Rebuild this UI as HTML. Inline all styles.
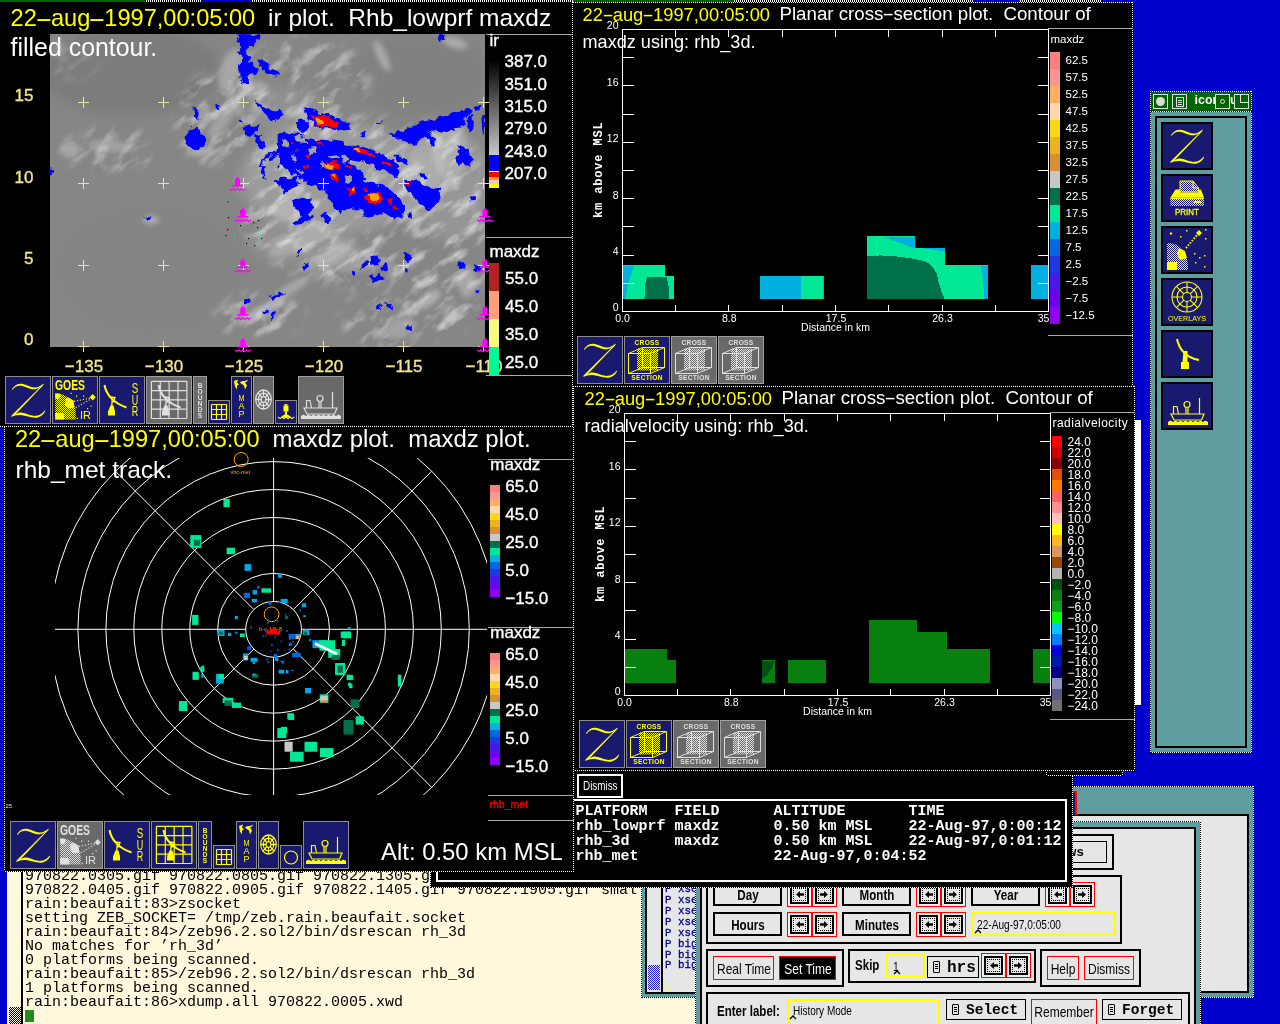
<!DOCTYPE html>
<html><head><meta charset="utf-8"><title>zeb display</title>
<style>
html,body{margin:0;padding:0;background:#0000cd;}
#scr{will-change:transform;position:relative;width:1280px;height:1024px;overflow:hidden;background:#0000cd;font-family:"Liberation Sans",sans-serif;color:#fff;}
#scr div,#scr span,#scr svg{position:absolute;box-sizing:border-box;}
.t{white-space:pre;line-height:1;}
.blk{background:#000;}
.hv{font-family:"Liberation Sans",sans-serif;}
.mono{font-family:"Liberation Mono",monospace;}
.y{color:#ffff00;}
.kh{color:#f0e68c;}
.dh{min-height:1px;background:repeating-linear-gradient(90deg,#fff 0 1px,#000 1px 2px);}
.dv{min-width:1px;background:repeating-linear-gradient(180deg,#fff 0 1px,#000 1px 2px);}
.gl{height:1px;background:#a9a9a9;}
.ico{width:46px;height:48px;border:1px solid #8c8c8c;background:#191970;}
.ico.g{background:#696969;border-color:#a0a0a0;}
.teal{background:#5f9ea0;}
.lg{background:#e6e6e6;}
.bb{border:2px solid #000;}
.rb{border:1px solid #f00;}
.nb{font-weight:bold;transform-origin:0 0;transform:scaleX(.77);color:#000;}
.nr{transform-origin:0 0;transform:scaleX(.8);color:#000;}
#scr i.hy{font-style:normal;display:inline-block;position:static;}
.b17{-webkit-text-stroke:0.35px currentColor;}

</style></head>
<body>
<div id="scr">
<div style="left:0px;top:0px;width:1280px;height:2px;background:repeating-linear-gradient(90deg,#fff 0 1px,#000 1px 2px);"></div>
<div style="left:0px;top:0px;width:145px;height:2px;background:#006400;"></div>
<div style="left:201px;top:0px;width:51px;height:2px;background:#0000cd;"></div>
<div style="left:573px;top:0px;width:160px;height:2px;background:#006400;"></div>
<div style="left:974px;top:0px;width:46px;height:2px;background:#0000cd;"></div>
<div style="left:1101px;top:0px;width:179px;height:2px;background:#0000cd;"></div>
<div class="teal" style="left:1040px;top:786px;width:214px;height:212px;"></div>
<div class="dh" style="left:1040px;top:786px;width:214px;height:0px;"></div>
<div class="dh" style="left:1040px;top:997px;width:214px;height:0px;"></div>
<div class="dv" style="left:1040px;top:786px;width:0px;height:212px;"></div>
<div class="dv" style="left:1253px;top:786px;width:0px;height:212px;"></div>
<div class="lg bb" style="left:1060px;top:814px;width:189px;height:179px;"></div>
<div style="left:1073px;top:791px;width:4px;height:24px;background:#191970;border-top:2px solid #f00;border-right:2px solid #f00;"></div>
<div style="left:0px;top:871px;width:8px;height:153px;background:#0000cd;"></div>
<div style="left:7px;top:871px;width:688px;height:153px;background:#fff8dc;"></div>
<div class="blk" style="left:21px;top:871px;width:2px;height:153px;"></div>
<div style="left:9px;top:1007px;width:12px;height:17px;background:repeating-conic-gradient(#000 0 25%,#fff8dc 0 50%) 0 0/2px 2px;"></div>
<span class="t mono" style="left:25px;top:869.2px;font-size:15px;color:#000;">970822.0305.gif 970822.0805.gif 970822.1305.gif 970822.1805.gif small</span>
<span class="t mono" style="left:25px;top:883.2px;font-size:15px;color:#000;">970822.0405.gif 970822.0905.gif 970822.1405.gif 970822.1905.gif small</span>
<span class="t mono" style="left:25px;top:897.2px;font-size:15px;color:#000;">rain:beaufait:83&gt;zsocket</span>
<span class="t mono" style="left:25px;top:911.2px;font-size:15px;color:#000;">setting ZEB_SOCKET= /tmp/zeb.rain.beaufait.socket</span>
<span class="t mono" style="left:25px;top:925.2px;font-size:15px;color:#000;">rain:beaufait:84&gt;/zeb96.2.sol2/bin/dsrescan rh_3d</span>
<span class="t mono" style="left:25px;top:939.2px;font-size:15px;color:#000;">No matches for ’rh_3d’</span>
<span class="t mono" style="left:25px;top:953.2px;font-size:15px;color:#000;">0 platforms being scanned.</span>
<span class="t mono" style="left:25px;top:967.2px;font-size:15px;color:#000;">rain:beaufait:85&gt;/zeb96.2.sol2/bin/dsrescan rhb_3d</span>
<span class="t mono" style="left:25px;top:981.2px;font-size:15px;color:#000;">1 platforms being scanned.</span>
<span class="t mono" style="left:25px;top:995.2px;font-size:15px;color:#000;">rain:beaufait:86&gt;xdump.all 970822.0005.xwd</span>
<div style="left:25px;top:1010px;width:9px;height:12px;background:#228b22;"></div>
<div class="teal" style="left:641px;top:880px;width:56px;height:118px;"></div>
<div class="dh" style="left:641px;top:997px;width:56px;height:0px;"></div>
<div class="dv" style="left:641px;top:880px;width:0px;height:118px;"></div>
<div class="lg" style="left:645px;top:880px;width:52px;height:114px;border-left:2px solid #000;border-bottom:2px solid #000;"></div>
<div class="blk" style="left:661px;top:880px;width:2px;height:112px;"></div>
<div style="left:648px;top:965px;width:12px;height:25px;background:repeating-conic-gradient(#2020c0 0 25%,#e6e6e6 0 50%) 0 0/2px 2px;"></div>
<span class="t mono" style="left:665px;top:883.82px;font-size:10.8px;color:#00008b;-webkit-text-stroke:0.3px #00008b;">P xse</span>
<span class="t mono" style="left:665px;top:894.77px;font-size:10.8px;color:#00008b;-webkit-text-stroke:0.3px #00008b;">P xse</span>
<span class="t mono" style="left:665px;top:905.72px;font-size:10.8px;color:#00008b;-webkit-text-stroke:0.3px #00008b;">P xse</span>
<span class="t mono" style="left:665px;top:916.67px;font-size:10.8px;color:#00008b;-webkit-text-stroke:0.3px #00008b;">P xse</span>
<span class="t mono" style="left:665px;top:927.62px;font-size:10.8px;color:#00008b;-webkit-text-stroke:0.3px #00008b;">P xse</span>
<span class="t mono" style="left:665px;top:938.57px;font-size:10.8px;color:#00008b;-webkit-text-stroke:0.3px #00008b;">P big</span>
<span class="t mono" style="left:665px;top:949.52px;font-size:10.8px;color:#00008b;-webkit-text-stroke:0.3px #00008b;">P big</span>
<span class="t mono" style="left:665px;top:960.47px;font-size:10.8px;color:#00008b;-webkit-text-stroke:0.3px #00008b;">P big</span>

<div class="teal" style="left:695px;top:821px;width:506px;height:203px;"></div>
<div class="dh" style="left:695px;top:821px;width:506px;height:0px;"></div>
<div class="dv" style="left:695px;top:821px;width:0px;height:204px;"></div>
<div class="dv" style="left:1200px;top:821px;width:0px;height:204px;"></div>
<div class="lg bb" style="left:700px;top:827px;width:496px;height:198px;border-bottom:none;"></div>
<div style="left:1040px;top:834px;width:74px;height:36px;border:2px solid #000;"></div>
<div style="left:1045px;top:841px;width:62px;height:22px;border:1px solid #000;"></div>
<span class="t mono" style="left:1068.5px;top:846.03px;font-size:13px;color:#000;font-weight:bold;">ws</span>
<div style="left:706px;top:875px;width:416px;height:69px;border:2px solid #000;"></div>
<div style="left:713px;top:882px;width:69px;height:24px;border:2px solid #000;"></div>
<span class="t hv" style="left:597.5px;top:887.73px;width:300px;text-align:center;font-size:14.5px;font-weight:bold;color:#000;transform:scaleX(0.8);">Day</span>
<div style="left:842px;top:882px;width:69px;height:24px;border:2px solid #000;"></div>
<span class="t hv" style="left:726.5px;top:887.73px;width:300px;text-align:center;font-size:14.5px;font-weight:bold;color:#000;transform:scaleX(0.8);">Month</span>
<div style="left:971px;top:882px;width:69px;height:24px;border:2px solid #000;"></div>
<span class="t hv" style="left:855.5px;top:887.73px;width:300px;text-align:center;font-size:14.5px;font-weight:bold;color:#000;transform:scaleX(0.8);">Year</span>
<div class="rb" style="left:787.0px;top:882px;width:25px;height:25px;background:#e8f2f2;"></div>
<div style="left:790.0px;top:885px;width:19px;height:19px;background:#000;"></div>
<div style="left:792.0px;top:887px;width:15px;height:15px;background:#e6e6e6;"></div>
<div style="left:793.0px;top:888px;width:13px;height:13px;border:1px dotted #000;"></div>
<svg style="left:795.5px;top:891px;" width="8" height="7"><polygon points="0,3.5 4.0,0 4.0,2.3 8,2.3 8,4.7 4.0,4.7 4.0,7" fill="#000"/></svg>
<div class="rb" style="left:811.5px;top:882px;width:25px;height:25px;background:#e8f2f2;"></div>
<div style="left:814.5px;top:885px;width:19px;height:19px;background:#000;"></div>
<div style="left:816.5px;top:887px;width:15px;height:15px;background:#e6e6e6;"></div>
<div style="left:817.5px;top:888px;width:13px;height:13px;border:1px dotted #000;"></div>
<svg style="left:820.0px;top:891px;" width="8" height="7"><polygon points="8,3.5 4.0,0 4.0,2.3 0,2.3 0,4.7 4.0,4.7 4.0,7" fill="#000"/></svg>
<div class="rb" style="left:916.0px;top:882px;width:25px;height:25px;background:#e8f2f2;"></div>
<div style="left:919.0px;top:885px;width:19px;height:19px;background:#000;"></div>
<div style="left:921.0px;top:887px;width:15px;height:15px;background:#e6e6e6;"></div>
<div style="left:922.0px;top:888px;width:13px;height:13px;border:1px dotted #000;"></div>
<svg style="left:924.5px;top:891px;" width="8" height="7"><polygon points="0,3.5 4.0,0 4.0,2.3 8,2.3 8,4.7 4.0,4.7 4.0,7" fill="#000"/></svg>
<div class="rb" style="left:940.5px;top:882px;width:25px;height:25px;background:#e8f2f2;"></div>
<div style="left:943.5px;top:885px;width:19px;height:19px;background:#000;"></div>
<div style="left:945.5px;top:887px;width:15px;height:15px;background:#e6e6e6;"></div>
<div style="left:946.5px;top:888px;width:13px;height:13px;border:1px dotted #000;"></div>
<svg style="left:949.0px;top:891px;" width="8" height="7"><polygon points="8,3.5 4.0,0 4.0,2.3 0,2.3 0,4.7 4.0,4.7 4.0,7" fill="#000"/></svg>
<div class="rb" style="left:1045.0px;top:882px;width:25px;height:25px;background:#e8f2f2;"></div>
<div style="left:1048.0px;top:885px;width:19px;height:19px;background:#000;"></div>
<div style="left:1050.0px;top:887px;width:15px;height:15px;background:#e6e6e6;"></div>
<div style="left:1051.0px;top:888px;width:13px;height:13px;border:1px dotted #000;"></div>
<svg style="left:1053.5px;top:891px;" width="8" height="7"><polygon points="0,3.5 4.0,0 4.0,2.3 8,2.3 8,4.7 4.0,4.7 4.0,7" fill="#000"/></svg>
<div class="rb" style="left:1069.5px;top:882px;width:25px;height:25px;background:#e8f2f2;"></div>
<div style="left:1072.5px;top:885px;width:19px;height:19px;background:#000;"></div>
<div style="left:1074.5px;top:887px;width:15px;height:15px;background:#e6e6e6;"></div>
<div style="left:1075.5px;top:888px;width:13px;height:13px;border:1px dotted #000;"></div>
<svg style="left:1078.0px;top:891px;" width="8" height="7"><polygon points="8,3.5 4.0,0 4.0,2.3 0,2.3 0,4.7 4.0,4.7 4.0,7" fill="#000"/></svg>
<div style="left:713px;top:912px;width:69px;height:24px;border:2px solid #000;"></div>
<span class="t hv" style="left:597.5px;top:917.73px;width:300px;text-align:center;font-size:14.5px;font-weight:bold;color:#000;transform:scaleX(0.8);">Hours</span>
<div style="left:842px;top:912px;width:69px;height:24px;border:2px solid #000;"></div>
<span class="t hv" style="left:726.5px;top:917.73px;width:300px;text-align:center;font-size:14.5px;font-weight:bold;color:#000;transform:scaleX(0.8);">Minutes</span>
<div class="rb" style="left:787.0px;top:912px;width:25px;height:25px;background:#e8f2f2;"></div>
<div style="left:790.0px;top:915px;width:19px;height:19px;background:#000;"></div>
<div style="left:792.0px;top:917px;width:15px;height:15px;background:#e6e6e6;"></div>
<div style="left:793.0px;top:918px;width:13px;height:13px;border:1px dotted #000;"></div>
<svg style="left:795.5px;top:921px;" width="8" height="7"><polygon points="0,3.5 4.0,0 4.0,2.3 8,2.3 8,4.7 4.0,4.7 4.0,7" fill="#000"/></svg>
<div class="rb" style="left:811.5px;top:912px;width:25px;height:25px;background:#e8f2f2;"></div>
<div style="left:814.5px;top:915px;width:19px;height:19px;background:#000;"></div>
<div style="left:816.5px;top:917px;width:15px;height:15px;background:#e6e6e6;"></div>
<div style="left:817.5px;top:918px;width:13px;height:13px;border:1px dotted #000;"></div>
<svg style="left:820.0px;top:921px;" width="8" height="7"><polygon points="8,3.5 4.0,0 4.0,2.3 0,2.3 0,4.7 4.0,4.7 4.0,7" fill="#000"/></svg>
<div class="rb" style="left:916.0px;top:912px;width:25px;height:25px;background:#e8f2f2;"></div>
<div style="left:919.0px;top:915px;width:19px;height:19px;background:#000;"></div>
<div style="left:921.0px;top:917px;width:15px;height:15px;background:#e6e6e6;"></div>
<div style="left:922.0px;top:918px;width:13px;height:13px;border:1px dotted #000;"></div>
<svg style="left:924.5px;top:921px;" width="8" height="7"><polygon points="0,3.5 4.0,0 4.0,2.3 8,2.3 8,4.7 4.0,4.7 4.0,7" fill="#000"/></svg>
<div class="rb" style="left:940.5px;top:912px;width:25px;height:25px;background:#e8f2f2;"></div>
<div style="left:943.5px;top:915px;width:19px;height:19px;background:#000;"></div>
<div style="left:945.5px;top:917px;width:15px;height:15px;background:#e6e6e6;"></div>
<div style="left:946.5px;top:918px;width:13px;height:13px;border:1px dotted #000;"></div>
<svg style="left:949.0px;top:921px;" width="8" height="7"><polygon points="8,3.5 4.0,0 4.0,2.3 0,2.3 0,4.7 4.0,4.7 4.0,7" fill="#000"/></svg>
<div style="left:971px;top:912px;width:145px;height:24px;border:2px solid #ffff00;"></div>
<span class="t hv nr" style="left:977px;top:918.842px;font-size:12px;transform:scaleX(.845);">22-Aug-97,0:05:00</span>
<svg style="left:974px;top:929px;" width="8" height="5"><path d="M1 4 L4 1 L7 4" stroke="#000" stroke-width="1.3" fill="none"/></svg>
<div style="left:706px;top:949px;width:138px;height:38px;border:2px solid #000;"></div>
<div class="rb" style="left:713px;top:956px;width:61px;height:24px;"></div>
<span class="t hv" style="left:593.5px;top:961.3px;width:300px;text-align:center;font-size:15px;font-weight:normal;color:#000;transform:scaleX(0.8);">Real Time</span>
<div class="rb" style="left:779px;top:956px;width:57px;height:24px;background:#000;"></div>
<span class="t hv" style="left:657.5px;top:961.3px;width:300px;text-align:center;font-size:15px;font-weight:normal;color:#fff;transform:scaleX(0.8);">Set Time</span>
<div style="left:848px;top:949px;width:188px;height:34px;border:2px solid #000;"></div>
<span class="t hv nb" style="left:855px;top:956.8025px;font-size:15px;">Skip</span>
<div style="left:886px;top:953px;width:39px;height:24px;border:2px solid #ffff00;"></div>
<span class="t hv nr" style="left:893px;top:959.9955px;font-size:13px;">1</span>
<svg style="left:893px;top:970px;" width="8" height="5"><path d="M1 4 L4 1 L7 4" stroke="#000" stroke-width="1.3" fill="none"/></svg>
<div style="left:927px;top:956px;width:52px;height:22px;border:1px solid #000;"></div>
<div style="left:933px;top:961px;width:7px;height:12px;border:1px solid #000;border-radius:1px;"></div>
<div class="blk" style="left:935px;top:964px;width:3px;height:1px;"></div>
<div class="blk" style="left:935px;top:966px;width:3px;height:1px;"></div>
<div class="blk" style="left:935px;top:968px;width:3px;height:1px;"></div>
<span class="t mono" style="left:947px;top:959.73px;font-size:16px;color:#000;font-weight:bold;">hrs</span>
<div class="rb" style="left:981.0px;top:953px;width:25px;height:25px;background:#e8f2f2;"></div>
<div style="left:984.0px;top:956px;width:19px;height:19px;background:#000;"></div>
<div style="left:986.0px;top:958px;width:15px;height:15px;background:#e6e6e6;"></div>
<div style="left:987.0px;top:959px;width:13px;height:13px;border:1px dotted #000;"></div>
<svg style="left:989.5px;top:962px;" width="8" height="7"><polygon points="0,3.5 4.0,0 4.0,2.3 8,2.3 8,4.7 4.0,4.7 4.0,7" fill="#000"/></svg>
<div class="rb" style="left:1005.5px;top:953px;width:25px;height:25px;background:#e8f2f2;"></div>
<div style="left:1008.5px;top:956px;width:19px;height:19px;background:#000;"></div>
<div style="left:1010.5px;top:958px;width:15px;height:15px;background:#e6e6e6;"></div>
<div style="left:1011.5px;top:959px;width:13px;height:13px;border:1px dotted #000;"></div>
<svg style="left:1014.0px;top:962px;" width="8" height="7"><polygon points="8,3.5 4.0,0 4.0,2.3 0,2.3 0,4.7 4.0,4.7 4.0,7" fill="#000"/></svg>
<div style="left:1040px;top:949px;width:101px;height:38px;border:2px solid #000;"></div>
<div class="rb" style="left:1047px;top:956px;width:32px;height:24px;"></div>
<span class="t hv" style="left:913.0px;top:961.3px;width:300px;text-align:center;font-size:15px;font-weight:normal;color:#000;transform:scaleX(0.8);">Help</span>
<div class="rb" style="left:1084px;top:956px;width:50px;height:24px;"></div>
<span class="t hv" style="left:959.0px;top:961.3px;width:300px;text-align:center;font-size:15px;font-weight:normal;color:#000;transform:scaleX(0.8);">Dismiss</span>
<div style="left:706px;top:992px;width:484px;height:40px;border:2px solid #000;"></div>
<span class="t hv nb" style="left:716.5px;top:1003.0025px;font-size:15px;">Enter label:</span>
<div style="left:787px;top:999px;width:153px;height:30px;border:2px solid #ffff00;"></div>
<span class="t hv nr" style="left:793px;top:1004.91875px;font-size:12.5px;">History Mode</span>
<svg style="left:789px;top:1015px;" width="8" height="5"><path d="M1 4 L4 1 L7 4" stroke="#000" stroke-width="1.3" fill="none"/></svg>
<div style="left:946px;top:999px;width:80px;height:21px;border:1px solid #000;"></div>
<div style="left:952px;top:1004px;width:7px;height:11px;border:1px solid #000;border-radius:1px;"></div>
<div class="blk" style="left:954px;top:1007px;width:3px;height:1px;"></div>
<div class="blk" style="left:954px;top:1009px;width:3px;height:1px;"></div>
<div class="blk" style="left:954px;top:1011px;width:3px;height:1px;"></div>
<span class="t mono" style="left:966px;top:1002.88px;font-size:14.5px;color:#000;font-weight:bold;">Select</span>
<div class="rb" style="left:1031px;top:999px;width:66px;height:30px;"></div>
<span class="t hv" style="left:914.0px;top:1004.3px;width:300px;text-align:center;font-size:15px;font-weight:normal;color:#000;transform:scaleX(0.8);">Remember</span>
<div style="left:1102px;top:999px;width:80px;height:21px;border:1px solid #000;"></div>
<div style="left:1108px;top:1004px;width:7px;height:11px;border:1px solid #000;border-radius:1px;"></div>
<div class="blk" style="left:1110px;top:1007px;width:3px;height:1px;"></div>
<div class="blk" style="left:1110px;top:1009px;width:3px;height:1px;"></div>
<div class="blk" style="left:1110px;top:1011px;width:3px;height:1px;"></div>
<span class="t mono" style="left:1122px;top:1002.88px;font-size:14.5px;color:#000;font-weight:bold;">Forget</span>

<div class="blk" style="left:430px;top:770px;width:643px;height:118px;"></div>
<div class="dh" style="left:430px;top:887px;width:643px;height:0px;"></div>
<div class="dv" style="left:430px;top:770px;width:0px;height:118px;"></div>
<div class="dv" style="left:1072px;top:770px;width:0px;height:118px;"></div>
<div style="left:436px;top:799px;width:631px;height:83px;border:2px solid #fff;"></div>
<div style="left:577px;top:774px;width:46px;height:24px;border:2px solid #fff;"></div>
<span class="t hv" style="left:583px;top:779.92px;font-size:12.5px;transform-origin:0 0;transform:scaleX(.79);">Dismiss</span>
<span class="t mono" style="left:575.5px;top:804.0px;font-size:15px;font-weight:bold;">PLATFORM   FIELD      ALTITUDE       TIME</span>
<span class="t mono" style="left:575.5px;top:819.0px;font-size:15px;font-weight:bold;">rhb_lowprf maxdz      0.50 km MSL    22-Aug-97,0:00:12</span>
<span class="t mono" style="left:575.5px;top:834.0px;font-size:15px;font-weight:bold;">rhb_3d     maxdz      0.50 km MSL    22-Aug-97,0:01:12</span>
<span class="t mono" style="left:575.5px;top:849.0px;font-size:15px;font-weight:bold;">rhb_met               22-Aug-97,0:04:52</span>
<div class="blk" style="left:1046px;top:770px;width:77px;height:6px;"></div>
<div class="dh" style="left:1046px;top:775px;width:77px;height:0px;"></div>
<div class="dv" style="left:1046px;top:770px;width:0px;height:6px;"></div>
<div class="dv" style="left:1122px;top:770px;width:0px;height:6px;"></div>

<svg width="0" height="0" style="left:0;top:0;"><defs>
<pattern id="sty" width="2" height="2" patternUnits="userSpaceOnUse"><rect width="1" height="1" fill="#ffff00"/><rect x="1" y="1" width="1" height="1" fill="#ffff00"/></pattern>
<pattern id="stg" width="2" height="2" patternUnits="userSpaceOnUse"><rect width="1" height="1" fill="#e0e0e0"/><rect x="1" y="1" width="1" height="1" fill="#e0e0e0"/></pattern>
</defs></svg>
<div class="blk" style="left:573px;top:2px;width:560px;height:384px;"></div>
<div class="dh" style="left:573px;top:2px;width:560px;height:0px;"></div>
<div class="dv" style="left:1132px;top:2px;width:0px;height:384px;"></div>
<span class="t hv y" style="left:582.5px;top:5.71px;font-size:18.3px;">22<i class="hy" style="transform:scaleX(1.9);margin:0 1.9px;">-</i>aug<i class="hy" style="transform:scaleX(1.9);margin:0 1.9px;">-</i>1997,00:05:00</span>
<span class="t hv" style="left:779.5px;top:5.37px;font-size:18.7px;">Planar cross<i class="hy" style="transform:scaleX(1.9);margin:0 1.9px;">-</i>section plot.  Contour of</span>
<span class="t hv" style="left:582.5px;top:32.88px;font-size:18.1px;">maxdz using: rhb_3d.</span>
<svg style="left:621.0px;top:28.0px;" width="430" height="286" viewBox="-1.5 -1.5 430 286">
<g shape-rendering="crispEdges"><rect x="0" y="235" width="42" height="34" fill="#00e896"/>
<rect x="42" y="246" width="9" height="23" fill="#00e896"/>
<path d="M0 236 H12 C8 244 5 255 3 269 H0 Z" fill="#00b0e0"/>
<path d="M22 269 C22 258 23 250 25 247 H44 C46 254 47 262 47 269 Z" fill="#00704a"/>
<rect x="137" y="246" width="42" height="23" fill="#00b0e0"/>
<rect x="179" y="246" width="22" height="23" fill="#00e896"/>
<rect x="200" y="246" width="1.5" height="23" fill="#00b0e0"/>
<path d="M179 247 C178 255 178 262 179 269 H182 V247 Z" fill="#00e896"/>
<rect x="244.5" y="206" width="47.5" height="63" fill="#00e896"/>
<rect x="292" y="218" width="30" height="51" fill="#00e896"/>
<rect x="322" y="235" width="43" height="34" fill="#00e896"/>
<path d="M258 207 H292 V219 C280 214 268 210 258 207 Z" fill="#00b0e0"/>
<path d="M292 218 H322 V222 C312 220 302 219 292 218 Z" fill="#00b0e0"/>
<path d="M358 236 H365 V269 H362 C361 255 360 245 358 236 Z" fill="#00b0e0"/>
<path d="M244.500 227 C262 224 285 228 300 231 C310 234 314 240 316 252 C318 260 320 265 322 269 H244.5 Z" fill="#00704a"/>
<rect x="408.5" y="235" width="17.5" height="34" fill="#00b0e0"/></g>
<g stroke="#fff" stroke-width="1" fill="none" shape-rendering="crispEdges"><path d="M0 282 L0 0 L426 0 M0 282 L426 282 M426 0 L426 282"/>
<path d="M0 28 h11 M426 28 h-11 M0 56 h11 M426 56 h-11 M0 85 h11 M426 85 h-11 M0 113 h11 M426 113 h-11 M0 141 h11 M426 141 h-11 M0 169 h11 M426 169 h-11 M0 197 h11 M426 197 h-11 M0 226 h11 M426 226 h-11 M0 254 h11 M426 254 h-11 M53 0 v7 M53 282 v-7 M106 0 v7 M106 282 v-7 M160 0 v7 M160 282 v-7 M213 0 v7 M213 282 v-7 M266 0 v7 M266 282 v-7 M320 0 v7 M320 282 v-7 M373 0 v7 M373 282 v-7"/></g>
</svg>
<span class="t hv" style="left:588.5px;width:30px;text-align:right;top:20.3px;font-size:10.5px;">20</span>
<span class="t hv" style="left:588.5px;width:30px;text-align:right;top:76.7px;font-size:10.5px;">16</span>
<span class="t hv" style="left:588.5px;width:30px;text-align:right;top:133.10000000000002px;font-size:10.5px;">12</span>
<span class="t hv" style="left:588.5px;width:30px;text-align:right;top:189.5px;font-size:10.5px;">8</span>
<span class="t hv" style="left:588.5px;width:30px;text-align:right;top:245.9px;font-size:10.5px;">4</span>
<span class="t hv" style="left:588.5px;width:30px;text-align:right;top:302.3px;font-size:10.5px;">0</span>
<span class="t hv" style="left:602.5px;width:40px;text-align:center;top:313.2px;font-size:10.5px;">0.0</span>
<span class="t hv" style="left:709.2px;width:40px;text-align:center;top:313.2px;font-size:10.5px;">8.8</span>
<span class="t hv" style="left:816.0px;width:40px;text-align:center;top:313.2px;font-size:10.5px;">17.5</span>
<span class="t hv" style="left:922.5px;width:40px;text-align:center;top:313.2px;font-size:10.5px;">26.3</span>
<span class="t hv" style="left:1023.5px;width:40px;text-align:center;top:313.2px;font-size:10.5px;">35</span>
<span class="t hv" style="left:785.5px;width:100px;text-align:center;top:322.0px;font-size:10.5px;">Distance in km</span>
<span class="t mono" style="left:593px;top:218px;font-size:12px;font-weight:bold;transform-origin:0 0;transform:rotate(-90deg);letter-spacing:0.85px;">km above MSL</span>
<span class="t hv" style="left:1050.5px;top:33.77px;font-size:11.5px;">maxdz</span>
<div style="left:1050.0px;top:52px;width:10px;height:17px;background:#fa8080;"></div>
<div style="left:1050.0px;top:69px;width:10px;height:17px;background:#ff9494;"></div>
<div style="left:1050.0px;top:86px;width:10px;height:17px;background:#ffb060;"></div>
<div style="left:1050.0px;top:103px;width:10px;height:17px;background:#ffd8b0;"></div>
<div style="left:1050.0px;top:120px;width:10px;height:17px;background:#fad818;"></div>
<div style="left:1050.0px;top:137px;width:10px;height:17px;background:#ecb420;"></div>
<div style="left:1050.0px;top:154px;width:10px;height:17px;background:#d89030;"></div>
<div style="left:1050.0px;top:171px;width:10px;height:17px;background:#c8c8c8;"></div>
<div style="left:1050.0px;top:188px;width:10px;height:17px;background:#00704a;"></div>
<div style="left:1050.0px;top:205px;width:10px;height:17px;background:#00e896;"></div>
<div style="left:1050.0px;top:222px;width:10px;height:17px;background:#00b0e0;"></div>
<div style="left:1050.0px;top:239px;width:10px;height:17px;background:#0068e0;"></div>
<div style="left:1050.0px;top:256px;width:10px;height:17px;background:#2038e0;"></div>
<div style="left:1050.0px;top:273px;width:10px;height:17px;background:#4818e8;"></div>
<div style="left:1050.0px;top:290px;width:10px;height:17px;background:#7000f0;"></div>
<div style="left:1050.0px;top:307px;width:10px;height:17px;background:#9000f8;"></div>
<span class="t hv" style="left:1065.5px;top:55.02px;font-size:11.5px;">62.5</span>
<span class="t hv" style="left:1065.5px;top:72.02px;font-size:11.5px;">57.5</span>
<span class="t hv" style="left:1065.5px;top:89.02px;font-size:11.5px;">52.5</span>
<span class="t hv" style="left:1065.5px;top:106.02px;font-size:11.5px;">47.5</span>
<span class="t hv" style="left:1065.5px;top:123.02px;font-size:11.5px;">42.5</span>
<span class="t hv" style="left:1065.5px;top:140.02px;font-size:11.5px;">37.5</span>
<span class="t hv" style="left:1065.5px;top:157.02px;font-size:11.5px;">32.5</span>
<span class="t hv" style="left:1065.5px;top:174.02px;font-size:11.5px;">27.5</span>
<span class="t hv" style="left:1065.5px;top:191.02px;font-size:11.5px;">22.5</span>
<span class="t hv" style="left:1065.5px;top:208.02px;font-size:11.5px;">17.5</span>
<span class="t hv" style="left:1065.5px;top:225.02px;font-size:11.5px;">12.5</span>
<span class="t hv" style="left:1065.5px;top:242.02px;font-size:11.5px;">7.5</span>
<span class="t hv" style="left:1065.5px;top:259.02px;font-size:11.5px;">2.5</span>
<span class="t hv" style="left:1065.5px;top:276.02px;font-size:11.5px;">−2.5</span>
<span class="t hv" style="left:1065.5px;top:293.02px;font-size:11.5px;">−7.5</span>
<span class="t hv" style="left:1065.5px;top:310.02px;font-size:11.5px;">−12.5</span>
<div class="gl" style="left:1048.0px;top:335px;width:85px;height:1px;"></div>
<div class="gl" style="left:1048.0px;top:28px;width:85px;height:1px;"></div>
<div class="ico" style="left:577px;top:336px;width:46px;height:48px;"></div><svg style="left:577px;top:336px;" width="46" height="48" viewBox="0 0 46 48"><path d="M7 13 C10 8.500 14 7 18 8 C23 9.300 27 12 31 11.500 C34 11 36 9.500 38.500 7.500 L38.500 9 L10.500 38.300 C13 36.500 16 36 19 37 C24 38.500 27 40.300 31 39.800 C35 39.300 37.500 37.300 39.500 34.500 L40 35.500 C38 39.500 34 41.800 30 41.800 C25 41.800 21 39.600 16 39.100 C12 38.700 9 39.800 6.500 41 L6.500 39.500 L35.500 10.800 C33 12.800 30 13.600 27 13.300 C23 12.800 20 10.300 16 9.800 C12.500 9.400 10 10.700 7.500 14 Z" fill="#ffff00"/></svg>
<div class="ico" style="left:624px;top:336px;width:46px;height:48px;"></div><svg style="left:624px;top:336px;" width="46" height="48" viewBox="0 0 46 48">
<text x="23" y="9" font-family="Liberation Sans,sans-serif" font-weight="bold" font-size="6.6" text-anchor="middle" fill="#ffff00" letter-spacing="0.3">CROSS</text>
<text x="23" y="43.7" font-family="Liberation Sans,sans-serif" font-weight="bold" font-size="6.6" text-anchor="middle" fill="#ffff00" letter-spacing="0.3">SECTION</text>
<g fill="none" stroke="#ffff00" stroke-width="1">
<rect x="4.5" y="17.5" width="22" height="20"/>
<path d="M4.5 17.5 L18.5 11.500 L40.5 11.5 L26.5 17.5 M40.5 11.5 L40.5 31.5 L26.5 37.5 M4.500 37.5 L18.5 31.5 L40.5 31.5 M18.5 11.5 L18.5 31.5"/>
</g>
<rect x="13" y="12.5" width="21" height="22" fill="url(#sty)"/>
</svg>
<div class="ico g" style="left:671px;top:336px;width:46px;height:48px;"></div><svg style="left:671px;top:336px;" width="46" height="48" viewBox="0 0 46 48">
<text x="23" y="9" font-family="Liberation Sans,sans-serif" font-weight="bold" font-size="6.6" text-anchor="middle" fill="#e0e0e0" letter-spacing="0.3">CROSS</text>
<text x="23" y="43.7" font-family="Liberation Sans,sans-serif" font-weight="bold" font-size="6.6" text-anchor="middle" fill="#e0e0e0" letter-spacing="0.3">SECTION</text>
<g fill="none" stroke="#e0e0e0" stroke-width="1">
<rect x="4.5" y="17.5" width="22" height="20"/>
<path d="M4.5 17.5 L18.5 11.500 L40.5 11.5 L26.5 17.5 M40.5 11.5 L40.5 31.5 L26.5 37.5 M4.500 37.5 L18.5 31.5 L40.5 31.5 M18.5 11.5 L18.5 31.5"/>
</g>
<rect x="13" y="12.5" width="21" height="22" fill="url(#stg)"/>
</svg>
<div class="ico g" style="left:718px;top:336px;width:46px;height:48px;"></div><svg style="left:718px;top:336px;" width="46" height="48" viewBox="0 0 46 48">
<text x="23" y="9" font-family="Liberation Sans,sans-serif" font-weight="bold" font-size="6.6" text-anchor="middle" fill="#e0e0e0" letter-spacing="0.3">CROSS</text>
<text x="23" y="43.7" font-family="Liberation Sans,sans-serif" font-weight="bold" font-size="6.6" text-anchor="middle" fill="#e0e0e0" letter-spacing="0.3">SECTION</text>
<g fill="none" stroke="#e0e0e0" stroke-width="1">
<rect x="4.5" y="17.5" width="22" height="20"/>
<path d="M4.5 17.5 L18.5 11.500 L40.5 11.5 L26.5 17.5 M40.5 11.5 L40.5 31.5 L26.5 37.5 M4.500 37.5 L18.5 31.5 L40.5 31.5 M18.5 11.5 L18.5 31.5"/>
</g>
<rect x="13" y="12.5" width="21" height="22" fill="url(#stg)"/>
</svg>

<div class="blk" style="left:574px;top:386px;width:561px;height:384px;"></div>
<div class="dh" style="left:575px;top:386px;width:560px;height:0px;"></div>
<div class="dv" style="left:573px;top:386px;width:0px;height:41px;"></div>
<div class="dv" style="left:1134px;top:386px;width:0px;height:384px;"></div>
<div class="dh" style="left:575px;top:770px;width:560px;height:0px;"></div>
<span class="t hv y" style="left:584.5px;top:389.71px;font-size:18.3px;">22<i class="hy" style="transform:scaleX(1.9);margin:0 1.9px;">-</i>aug<i class="hy" style="transform:scaleX(1.9);margin:0 1.9px;">-</i>1997,00:05:00</span>
<span class="t hv" style="left:781.5px;top:389.37px;font-size:18.7px;">Planar cross<i class="hy" style="transform:scaleX(1.9);margin:0 1.9px;">-</i>section plot.  Contour of</span>
<span class="t hv" style="left:584.5px;top:416.88px;font-size:18.1px;">radialvelocity using: rhb_3d.</span>
<svg style="left:623.0px;top:412.0px;" width="430" height="286" viewBox="-1.5 -1.5 430 286">
<g shape-rendering="crispEdges"><rect x="0" y="235" width="42" height="34" fill="#088010"/>
<rect x="42" y="246" width="9" height="23" fill="#088010"/>
<rect x="137" y="246" width="13" height="23" fill="#088010"/>
<path d="M137 247 H150 C148 256 143 263 137 266 Z" fill="#005014"/>
<rect x="163" y="246" width="38" height="23" fill="#088010"/>
<rect x="244.5" y="206" width="47.5" height="63" fill="#088010"/>
<rect x="292" y="218" width="30" height="51" fill="#088010"/>
<rect x="322" y="235" width="43" height="34" fill="#088010"/>
<rect x="408.5" y="235" width="17.5" height="34" fill="#088010"/></g>
<g stroke="#fff" stroke-width="1" fill="none" shape-rendering="crispEdges"><path d="M0 282 L0 0 L426 0 M0 282 L426 282 M426 0 L426 282"/>
<path d="M0 28 h11 M426 28 h-11 M0 56 h11 M426 56 h-11 M0 85 h11 M426 85 h-11 M0 113 h11 M426 113 h-11 M0 141 h11 M426 141 h-11 M0 169 h11 M426 169 h-11 M0 197 h11 M426 197 h-11 M0 226 h11 M426 226 h-11 M0 254 h11 M426 254 h-11 M53 0 v7 M53 282 v-7 M106 0 v7 M106 282 v-7 M160 0 v7 M160 282 v-7 M213 0 v7 M213 282 v-7 M266 0 v7 M266 282 v-7 M320 0 v7 M320 282 v-7 M373 0 v7 M373 282 v-7"/></g>
</svg>
<span class="t hv" style="left:590.5px;width:30px;text-align:right;top:404.3px;font-size:10.5px;">20</span>
<span class="t hv" style="left:590.5px;width:30px;text-align:right;top:460.7px;font-size:10.5px;">16</span>
<span class="t hv" style="left:590.5px;width:30px;text-align:right;top:517.0999999999999px;font-size:10.5px;">12</span>
<span class="t hv" style="left:590.5px;width:30px;text-align:right;top:573.5px;font-size:10.5px;">8</span>
<span class="t hv" style="left:590.5px;width:30px;text-align:right;top:629.9px;font-size:10.5px;">4</span>
<span class="t hv" style="left:590.5px;width:30px;text-align:right;top:686.3px;font-size:10.5px;">0</span>
<span class="t hv" style="left:604.5px;width:40px;text-align:center;top:697.2px;font-size:10.5px;">0.0</span>
<span class="t hv" style="left:711.2px;width:40px;text-align:center;top:697.2px;font-size:10.5px;">8.8</span>
<span class="t hv" style="left:818.0px;width:40px;text-align:center;top:697.2px;font-size:10.5px;">17.5</span>
<span class="t hv" style="left:924.5px;width:40px;text-align:center;top:697.2px;font-size:10.5px;">26.3</span>
<span class="t hv" style="left:1025.5px;width:40px;text-align:center;top:697.2px;font-size:10.5px;">35</span>
<span class="t hv" style="left:787.5px;width:100px;text-align:center;top:706.0px;font-size:10.5px;">Distance in km</span>
<span class="t mono" style="left:595px;top:602px;font-size:12px;font-weight:bold;transform-origin:0 0;transform:rotate(-90deg);letter-spacing:0.85px;">km above MSL</span>
<span class="t hv" style="left:1052.5px;top:417.34px;font-size:12px;letter-spacing:0.45px;">radialvelocity</span>
<div style="left:1052.0px;top:436.3px;width:10px;height:11px;background:#ff0000;"></div>
<div style="left:1052.0px;top:447.3px;width:10px;height:11px;background:#d00000;"></div>
<div style="left:1052.0px;top:458.3px;width:10px;height:11px;background:#8b0000;"></div>
<div style="left:1052.0px;top:469.3px;width:10px;height:11px;background:#e05000;"></div>
<div style="left:1052.0px;top:480.3px;width:10px;height:11px;background:#ff7800;"></div>
<div style="left:1052.0px;top:491.3px;width:10px;height:11px;background:#ff6060;"></div>
<div style="left:1052.0px;top:502.3px;width:10px;height:11px;background:#ff9090;"></div>
<div style="left:1052.0px;top:513.3px;width:10px;height:11px;background:#ffc0c0;"></div>
<div style="left:1052.0px;top:524.3px;width:10px;height:11px;background:#ffff00;"></div>
<div style="left:1052.0px;top:535.3px;width:10px;height:11px;background:#ffb820;"></div>
<div style="left:1052.0px;top:546.3px;width:10px;height:11px;background:#d89860;"></div>
<div style="left:1052.0px;top:557.3px;width:10px;height:11px;background:#a04800;"></div>
<div style="left:1052.0px;top:568.3px;width:10px;height:11px;background:#b4b4b4;"></div>
<div style="left:1052.0px;top:579.3px;width:10px;height:11px;background:#005014;"></div>
<div style="left:1052.0px;top:590.3px;width:10px;height:11px;background:#088010;"></div>
<div style="left:1052.0px;top:601.3px;width:10px;height:11px;background:#10a018;"></div>
<div style="left:1052.0px;top:612.3px;width:10px;height:11px;background:#00ff00;"></div>
<div style="left:1052.0px;top:623.3px;width:10px;height:11px;background:#00c8ff;"></div>
<div style="left:1052.0px;top:634.3px;width:10px;height:11px;background:#0080ff;"></div>
<div style="left:1052.0px;top:645.3px;width:10px;height:11px;background:#0000d8;"></div>
<div style="left:1052.0px;top:656.3px;width:10px;height:11px;background:#0018a8;"></div>
<div style="left:1052.0px;top:667.3px;width:10px;height:11px;background:#000080;"></div>
<div style="left:1052.0px;top:678.3px;width:10px;height:11px;background:#9090c0;"></div>
<div style="left:1052.0px;top:689.3px;width:10px;height:11px;background:#585880;"></div>
<div style="left:1052.0px;top:700.3px;width:10px;height:11px;background:#707070;"></div>
<span class="t hv" style="left:1067.5px;top:436.08px;font-size:12px;">24.0</span>
<span class="t hv" style="left:1067.5px;top:447.08px;font-size:12px;">22.0</span>
<span class="t hv" style="left:1067.5px;top:458.08px;font-size:12px;">20.0</span>
<span class="t hv" style="left:1067.5px;top:469.08px;font-size:12px;">18.0</span>
<span class="t hv" style="left:1067.5px;top:480.08px;font-size:12px;">16.0</span>
<span class="t hv" style="left:1067.5px;top:491.08px;font-size:12px;">14.0</span>
<span class="t hv" style="left:1067.5px;top:502.08px;font-size:12px;">12.0</span>
<span class="t hv" style="left:1067.5px;top:513.08px;font-size:12px;">10.0</span>
<span class="t hv" style="left:1067.5px;top:524.08px;font-size:12px;">8.0</span>
<span class="t hv" style="left:1067.5px;top:535.08px;font-size:12px;">6.0</span>
<span class="t hv" style="left:1067.5px;top:546.08px;font-size:12px;">4.0</span>
<span class="t hv" style="left:1067.5px;top:557.08px;font-size:12px;">2.0</span>
<span class="t hv" style="left:1067.5px;top:568.08px;font-size:12px;">0.0</span>
<span class="t hv" style="left:1067.5px;top:579.08px;font-size:12px;">−2.0</span>
<span class="t hv" style="left:1067.5px;top:590.08px;font-size:12px;">−4.0</span>
<span class="t hv" style="left:1067.5px;top:601.08px;font-size:12px;">−6.0</span>
<span class="t hv" style="left:1067.5px;top:612.08px;font-size:12px;">−8.0</span>
<span class="t hv" style="left:1067.5px;top:623.08px;font-size:12px;">−10.0</span>
<span class="t hv" style="left:1067.5px;top:634.08px;font-size:12px;">−12.0</span>
<span class="t hv" style="left:1067.5px;top:645.08px;font-size:12px;">−14.0</span>
<span class="t hv" style="left:1067.5px;top:656.08px;font-size:12px;">−16.0</span>
<span class="t hv" style="left:1067.5px;top:667.08px;font-size:12px;">−18.0</span>
<span class="t hv" style="left:1067.5px;top:678.08px;font-size:12px;">−20.0</span>
<span class="t hv" style="left:1067.5px;top:689.08px;font-size:12px;">−22.0</span>
<span class="t hv" style="left:1067.5px;top:700.08px;font-size:12px;">−24.0</span>
<div class="gl" style="left:1050.0px;top:719px;width:85px;height:1px;"></div>
<div class="gl" style="left:1050.0px;top:412px;width:85px;height:1px;"></div>
<div class="ico" style="left:579px;top:720px;width:46px;height:48px;"></div><svg style="left:579px;top:720px;" width="46" height="48" viewBox="0 0 46 48"><path d="M7 13 C10 8.500 14 7 18 8 C23 9.300 27 12 31 11.500 C34 11 36 9.500 38.500 7.500 L38.500 9 L10.500 38.300 C13 36.500 16 36 19 37 C24 38.500 27 40.300 31 39.800 C35 39.300 37.500 37.300 39.500 34.500 L40 35.500 C38 39.500 34 41.800 30 41.800 C25 41.800 21 39.600 16 39.100 C12 38.700 9 39.800 6.500 41 L6.500 39.500 L35.500 10.800 C33 12.800 30 13.600 27 13.300 C23 12.800 20 10.300 16 9.800 C12.500 9.400 10 10.700 7.500 14 Z" fill="#ffff00"/></svg>
<div class="ico" style="left:626px;top:720px;width:46px;height:48px;"></div><svg style="left:626px;top:720px;" width="46" height="48" viewBox="0 0 46 48">
<text x="23" y="9" font-family="Liberation Sans,sans-serif" font-weight="bold" font-size="6.6" text-anchor="middle" fill="#ffff00" letter-spacing="0.3">CROSS</text>
<text x="23" y="43.7" font-family="Liberation Sans,sans-serif" font-weight="bold" font-size="6.6" text-anchor="middle" fill="#ffff00" letter-spacing="0.3">SECTION</text>
<g fill="none" stroke="#ffff00" stroke-width="1">
<rect x="4.5" y="17.5" width="22" height="20"/>
<path d="M4.5 17.5 L18.5 11.500 L40.5 11.5 L26.5 17.5 M40.5 11.5 L40.5 31.5 L26.5 37.5 M4.500 37.5 L18.5 31.5 L40.5 31.5 M18.5 11.5 L18.5 31.5"/>
</g>
<rect x="13" y="12.5" width="21" height="22" fill="url(#sty)"/>
</svg>
<div class="ico g" style="left:673px;top:720px;width:46px;height:48px;"></div><svg style="left:673px;top:720px;" width="46" height="48" viewBox="0 0 46 48">
<text x="23" y="9" font-family="Liberation Sans,sans-serif" font-weight="bold" font-size="6.6" text-anchor="middle" fill="#e0e0e0" letter-spacing="0.3">CROSS</text>
<text x="23" y="43.7" font-family="Liberation Sans,sans-serif" font-weight="bold" font-size="6.6" text-anchor="middle" fill="#e0e0e0" letter-spacing="0.3">SECTION</text>
<g fill="none" stroke="#e0e0e0" stroke-width="1">
<rect x="4.5" y="17.5" width="22" height="20"/>
<path d="M4.5 17.5 L18.5 11.500 L40.5 11.5 L26.5 17.5 M40.5 11.5 L40.5 31.5 L26.5 37.5 M4.500 37.5 L18.5 31.5 L40.5 31.5 M18.5 11.5 L18.5 31.5"/>
</g>
<rect x="13" y="12.5" width="21" height="22" fill="url(#stg)"/>
</svg>
<div class="ico g" style="left:720px;top:720px;width:46px;height:48px;"></div><svg style="left:720px;top:720px;" width="46" height="48" viewBox="0 0 46 48">
<text x="23" y="9" font-family="Liberation Sans,sans-serif" font-weight="bold" font-size="6.6" text-anchor="middle" fill="#e0e0e0" letter-spacing="0.3">CROSS</text>
<text x="23" y="43.7" font-family="Liberation Sans,sans-serif" font-weight="bold" font-size="6.6" text-anchor="middle" fill="#e0e0e0" letter-spacing="0.3">SECTION</text>
<g fill="none" stroke="#e0e0e0" stroke-width="1">
<rect x="4.5" y="17.5" width="22" height="20"/>
<path d="M4.5 17.5 L18.5 11.500 L40.5 11.5 L26.5 17.5 M40.5 11.5 L40.5 31.5 L26.5 37.5 M4.500 37.5 L18.5 31.5 L40.5 31.5 M18.5 11.5 L18.5 31.5"/>
</g>
<rect x="13" y="12.5" width="21" height="22" fill="url(#stg)"/>
</svg>
<div style="left:1135px;top:420px;width:6px;height:285px;background:#fff;"></div>

<div class="blk" style="left:0px;top:2px;width:573px;height:425px;"></div>
<div class="dv" style="left:572px;top:2px;width:0px;height:425px;"></div>
<div class="dh" style="left:0px;top:426px;width:574px;height:0px;"></div>
<span class="t hv y" style="left:10.6px;top:7.02px;font-size:23.6px;">22<i class="hy" style="transform:scaleX(2.25);margin:0 3.1px;">-</i>aug<i class="hy" style="transform:scaleX(2.25);margin:0 3.1px;">-</i>1997,00:05:00</span>
<span class="t hv" style="left:268px;top:5.76px;font-size:24.5px;">ir plot.  Rhb_lowprf maxdz</span>
<svg style="left:50px;top:34px;" width="435" height="313" viewBox="50 34 435 313">
<defs>
<filter id="jag" x="-5%" y="-5%" width="110%" height="110%"><feTurbulence type="fractalNoise" baseFrequency="0.16" numOctaves="2" seed="7" result="n"/><feDisplacementMap in="SourceGraphic" in2="n" scale="7" xChannelSelector="R" yChannelSelector="G"/></filter>
<filter id="bl6"><feGaussianBlur stdDeviation="6"/></filter>
<filter id="bl3"><feGaussianBlur stdDeviation="2.5"/></filter>
<filter id="cld" x="0" y="0" width="100%" height="100%"><feTurbulence type="fractalNoise" baseFrequency="0.04 0.085" numOctaves="5" seed="11"/><feColorMatrix type="matrix" values="0 0 0 0 1  0 0 0 0 1  0 0 0 0 1  3.2 0 0 0 -1.5"/></filter>
<radialGradient id="cm1"><stop offset="0" stop-color="#fff"/><stop offset="0.7" stop-color="#fff" stop-opacity=".7"/><stop offset="1" stop-color="#fff" stop-opacity="0"/></radialGradient>
<mask id="cmask" maskUnits="userSpaceOnUse" x="50" y="34" width="435" height="313">
<rect x="50" y="34" width="435" height="313" fill="#000"/>
<g filter="url(#bl6)" fill="#fff">
<ellipse cx="350" cy="200" rx="110" ry="85"/>
<ellipse cx="440" cy="230" rx="50" ry="110"/>
<ellipse cx="300" cy="80" rx="70" ry="40" opacity=".8"/>
<ellipse cx="215" cy="120" rx="40" ry="45" opacity=".9"/>
<ellipse cx="110" cy="150" rx="50" ry="22" opacity=".7"/>
<ellipse cx="260" cy="315" rx="45" ry="22" opacity=".9"/>
<ellipse cx="390" cy="320" rx="50" ry="30" opacity=".8"/>
<ellipse cx="70" cy="60" rx="30" ry="20" opacity=".4"/>
</g></mask>
</defs>
<rect x="50" y="34" width="435" height="313" fill="#868686"/>
<g filter="url(#bl6)"><ellipse cx="130" cy="70" rx="90" ry="45" fill="#7c7c7c"/><ellipse cx="420" cy="75" rx="70" ry="40" fill="#818181"/><ellipse cx="150" cy="270" rx="90" ry="60" fill="#848484"/></g>
<g filter="url(#bl6)"><ellipse cx="335" cy="178" rx="95" ry="55" fill="#a2a2a2" opacity=".75"/><ellipse cx="450" cy="185" rx="40" ry="55" fill="#9c9c9c" opacity=".7"/><ellipse cx="300" cy="240" rx="50" ry="25" fill="#9a9a9a" opacity=".6"/><ellipse cx="285" cy="110" rx="40" ry="22" fill="#989898" opacity=".6"/></g>
<g filter="url(#bl3)" fill="#d8d8d8">
<ellipse cx="262" cy="311" rx="28" ry="5" transform="rotate(-28 262 311)" opacity="0.55"/>
<ellipse cx="290" cy="289" rx="22" ry="5" transform="rotate(-30 290 289)" opacity="0.4"/>
<ellipse cx="382" cy="56" rx="5" ry="17" transform="rotate(-25 382 56)" opacity="0.45"/>
<ellipse cx="455" cy="43" rx="13" ry="5" transform="rotate(15 455 43)" opacity="0.5"/>
<ellipse cx="203" cy="152" rx="16" ry="5" transform="rotate(0 203 152)" opacity="0.45"/>
<ellipse cx="222" cy="120" rx="7" ry="22" transform="rotate(35 222 120)" opacity="0.35"/>
<ellipse cx="235" cy="100" rx="6" ry="18" transform="rotate(-20 235 100)" opacity="0.3"/>
<ellipse cx="110" cy="146" rx="22" ry="6" transform="rotate(5 110 146)" opacity="0.35"/>
<ellipse cx="428" cy="300" rx="15" ry="6" transform="rotate(-35 428 300)" opacity="0.5"/>
<ellipse cx="467" cy="282" rx="9" ry="16" transform="rotate(0 467 282)" opacity="0.4"/>
<ellipse cx="400" cy="328" rx="16" ry="10" transform="rotate(-20 400 328)" opacity="0.35"/>
<ellipse cx="340" cy="152" rx="30" ry="5" transform="rotate(20 340 152)" opacity="0.5"/>
<ellipse cx="375" cy="195" rx="10" ry="22" transform="rotate(-40 375 195)" opacity="0.35"/>
<ellipse cx="300" cy="240" rx="35" ry="10" transform="rotate(-25 300 240)" opacity="0.35"/>
<ellipse cx="330" cy="255" rx="30" ry="8" transform="rotate(-30 330 255)" opacity="0.3"/>
<ellipse cx="425" cy="170" rx="20" ry="35" transform="rotate(10 425 170)" opacity="0.3"/>
<ellipse cx="450" cy="150" rx="18" ry="30" transform="rotate(0 450 150)" opacity="0.35"/>
<ellipse cx="230" cy="70" rx="10" ry="22" transform="rotate(20 230 70)" opacity="0.4"/>
<ellipse cx="255" cy="88" rx="14" ry="7" transform="rotate(0 255 88)" opacity="0.4"/>
<ellipse cx="151" cy="220" rx="8" ry="4.5" transform="rotate(0 151 220)" opacity="0.5"/>
<ellipse cx="310" cy="118" rx="25" ry="6" transform="rotate(15 310 118)" opacity="0.3"/>
<ellipse cx="70" cy="150" rx="10" ry="8" transform="rotate(0 70 150)" opacity="0.4"/>
<ellipse cx="410" cy="215" rx="14" ry="8" transform="rotate(30 410 215)" opacity="0.35"/>
<ellipse cx="352" cy="260" rx="25" ry="12" transform="rotate(0 352 260)" opacity="0.3"/>
<ellipse cx="290" cy="210" rx="18" ry="12" transform="rotate(0 290 210)" opacity="0.4"/>
<ellipse cx="60" cy="50" rx="6" ry="8" transform="rotate(0 60 50)" opacity="0.3"/>
</g>
<g mask="url(#cmask)"><g transform="rotate(-38 267 190)"><rect x="-40" y="-120" width="620" height="620" filter="url(#cld)" opacity=".5"/></g></g>
<g filter="url(#jag)">
<g fill="#0000ff">
<polygon points="237.3,34.3 259.7,34.3 258.8,39.5 253.7,42.9 252.8,48 247.7,48 248.5,54.1 249.4,62.7 254.5,64.4 258.8,70.4 256.3,75.5 249.4,73.8 248.5,83.3 243.4,83.3 240.8,76.4 238.2,64.4 242.5,59.2 239.1,52.3 240.8,47.2 237.3,40.3" fill="#0000ff"/>
<polygon points="257.1,58.4 263.1,59.2 268.3,67.8 278.6,73 278.6,76.1 270,73.8 263.1,70.4 258.8,63.5" fill="#0000ff"/>
<polygon points="194.4,105.6 198.2,106.5 198.7,118.5 195.2,118.5" fill="#0000ff"/>
<polygon points="216.4,105.1 219.3,104.8 219,109.9 216.7,109.4" fill="#0000ff"/>
<polygon points="253.7,100.5 258,102.2 263.1,106.5 271.7,110.8 280.3,110.8 283.8,114.2 278.6,115.9 274.3,122 269.1,120.2 266.6,114.2 261.4,109.1 258,104.8" fill="#0000ff"/>
<polygon points="242.5,127.1 249.4,123.7 253.7,128 259.7,124.5 258,129.7 253.7,133.1 249.4,136.6 245.1,133.1" fill="#0000ff"/>
<polygon points="253.7,134.8 258.8,134 264.8,145.2 264,150.3 259.7,147.7 255.4,140" fill="#0000ff"/>
<polygon points="239.4,118.5 242.2,119.4 242.5,123.7 239.4,122.8" fill="#0000ff"/>
<polygon points="303.5,108.2 309.5,109.1 319.8,112.5 333.6,116.8 349.1,122.8 351.6,129.7 342.2,130.6 331.9,128 321.6,128.8 314.7,125.4 309.5,119.4 306.1,114.2" fill="#0000ff"/>
<polygon points="298.4,119.4 306.1,120.2 309.5,126.3 306.1,131.4 300.9,133.1 297.5,128" fill="#0000ff"/>
<polygon points="277.7,134.3 287.2,133.4 295.8,131.4 304.4,137.7 319.8,139.5 330.2,140.3 342.2,142 352.5,145.5 366.3,147.2 376.6,152.3 390.3,159.2 398.1,164.4 398.1,177.3 390.3,173.8 381.7,170.4 373.1,166.1 362.8,161.8 350.8,159.2 349.1,162.7 359.4,169.5 366.3,177.3 362.8,180.7 373.1,183.3 386.9,186.7 395.5,193.6 401.5,200.5 404.9,209.1 402.3,215.9 395.5,219.4 388.6,215.1 380,214.2 373.1,216.8 366.3,217.7 362.8,210.8 355.9,208.2 347.3,209.9 338.8,211.6 330.2,202.2 327.6,195.3 321.6,190.2 313,185 307,181.6 300.9,181.6 292.3,189.3 282.9,193.6 280.3,185 272.6,180.7 280.3,179 290.6,178.1 300.1,176.4 303.5,172.1 295.8,168.7 286.3,168.7 282,159.2 276.9,150.6 277.7,140.3" fill="#0000ff"/>
<polygon points="278.6,133.1 280.3,153.8 271.7,154.6 263.1,160.6 260.6,165.8 265.7,166.6 264,176.1 267.4,181.3 263.1,177.8 261.4,167.5 258.8,165.8 262.3,158.9 270,152.9 277.7,151.2" fill="#0000ff"/>
<polygon points="270,157.2 280.3,155.5 287.2,164.1 297.5,170.9 302.7,176.1 295.8,176.1 287.2,169.2 278.6,162.3 271.7,160.6" fill="#0000ff"/>
<polygon points="270.9,155.8 276.9,153.2 280.3,160.9 276.9,167 273.4,160.9" fill="#0000ff"/>
<polygon points="404.1,179.8 419.5,180.7 429.8,188.4 440.2,188.4 439.3,198.8 435,205.6 430.7,210.8 425.6,207.3 419.5,203.9 412.7,195.3 405.8,188.4" fill="#0000ff"/>
<polygon points="392.9,155.8 400.6,155.8 407.5,160.9 406.6,165.2 398.9,161.8" fill="#0000ff"/>
<polygon points="417.8,173 424.7,173.8 426.4,179 421.3,177.3" fill="#0000ff"/>
<polygon points="408.4,212.5 411.8,212.5 411.8,219.4 409.2,218.5" fill="#0000ff"/>
<polygon points="388.6,134.8 397.2,131.4 407.5,128.8 419.5,122.8 431.6,119.4 441.9,116.8 455.6,112.5 469.4,108.2 471.1,112.5 464.2,117.7 465.9,123.7 459.1,128 448.8,131.4 441.9,133.1 435,129.7 429.8,131.4 435,140 435.9,146.9 429.8,143.4 424.7,136.6 419.5,140 416.1,145.2 409.2,143.4 404.1,140 397.2,138.3" fill="#0000ff"/>
<polygon points="473.7,107.3 481.4,104.8 480.6,109.1 475.4,111.6" fill="#0000ff"/>
<polygon points="467.7,115.9 472,115.1 473.7,126.3 471.1,133.1 467.7,126.3" fill="#0000ff"/>
<polygon points="481.4,115.9 484.9,112.5 484.9,133.1 482.3,129.7" fill="#0000ff"/>
<polygon points="457.3,146.9 464.2,144.3 469.4,150.3 472.8,160.6 469.4,167.5 462.5,162.3 459.1,167.5 455.6,160.6 458.2,153.8" fill="#0000ff"/>
<polygon points="437.6,34.3 445.3,34.3 445.3,39.5 440.2,40.7" fill="#0000ff"/>
<polygon points="270,69.5 276.9,72.1 278.6,75.5 270.9,73.8" fill="#0000ff"/>
<polygon points="270,110.8 280.3,109.9 283.8,114.2 276.9,119.4 270,122" fill="#0000ff"/>
<polygon points="298.4,119.4 307,120.2 308.7,128 303.5,132.3 300.1,128.8" fill="#0000ff"/>
<polygon points="361.1,133.1 366.3,129.7 363.7,136.6 360.2,137.4" fill="#0000ff"/>
<polygon points="374.8,120.8 381.7,121.1 381.7,122.8 375.7,122.5" fill="#0000ff"/>
<polygon points="291.5,202 298.4,196.9 312.1,199.5 313,208.9 308.7,212.3 313,217.5 304.4,222.7 295.8,225.2 292.3,222.7 300.9,217.5 298.4,208.9 291.5,204.6" fill="#0000ff"/>
<polygon points="319,215.8 325.9,211.5 331,217.5 328.4,223.5 325,222.7 323.3,217.5" fill="#0000ff"/>
<polygon points="330.2,199.5 335.3,200.3 343.9,210.6 340.5,213.2 333.6,206.3" fill="#0000ff"/>
<polygon points="370.6,257 376.6,254.5 380.9,258.8 378.3,263.9 371.4,264.8" fill="#0000ff"/>
<polygon points="359.4,265.6 368.8,259.6 369.7,262.2 361.1,269.1" fill="#0000ff"/>
<polygon points="380,269.1 385.2,262.2 388.6,269.9 383.4,270.8" fill="#0000ff"/>
<polygon points="404.9,251.9 410.9,253.6 410.9,260.5 407.5,262.2 404.9,257.9" fill="#0000ff"/>
<polygon points="368.8,275.9 378.3,275.1 385.2,277.7 380,280.2 373.1,282.8" fill="#0000ff"/>
<polygon points="350.8,271.6 354.2,270.8 355.1,275.9 351.6,275.1" fill="#0000ff"/>
<polygon points="457.3,262.2 464.2,262.2 466.8,268.2 458.2,269.1" fill="#0000ff"/>
<polygon points="472,265.6 480.6,264.8 481.4,270.8 476.3,270.8" fill="#0000ff"/>
<polygon points="376.6,305.2 380.9,304.3 380,310.3 377.4,309.5" fill="#0000ff"/>
<polygon points="383.4,303.4 392,304.3 392.9,310.3 388.6,307.7" fill="#0000ff"/>
<polygon points="406.6,324.9 411.8,325.8 411.8,330.9 407.5,330.9" fill="#0000ff"/>
<polygon points="270,296.6 280.3,292.3 285.5,292.3 278.6,297.4 270,300" fill="#0000ff"/>
<polygon points="270,315.5 276,310.3 273.4,317.2 270,318.9" fill="#0000ff"/>
<polygon points="295.8,253.6 301.8,247.6 302.7,250.2 297.5,255.3" fill="#0000ff"/>
<polygon points="302.7,264.8 309.5,260.5 308.7,267.3 305.2,270.8" fill="#0000ff"/>
<polygon points="469.4,197.7 474.5,196.9 475.4,201.2 471.1,201.2" fill="#0000ff"/>
<polygon points="476.3,289.7 480.6,288 478.8,294.8" fill="#0000ff"/>
<polygon points="404.1,268.2 406.6,268.2 406.3,272.5 404.4,272.2" fill="#0000ff"/>
<polygon points="50,168.4 55.2,170.1 54.3,174.4 50,176.1" fill="#0000ff"/>
<polygon points="144.2,216.6 151.4,217.5 149.7,220.1 146.3,219.6" fill="#0000ff"/>
<polygon points="243.4,300 250.2,298.3 249.4,302.6 244.2,303.4" fill="#0000ff"/>
<polygon points="262.3,311.2 269.1,308.6 268.3,313.8 264,313.8" fill="#0000ff"/>
<circle cx="195.2" cy="139.3" r="10.3"/><rect x="192" y="127" width="5" height="5"/>
</g>
<polygon points="308.1,147.8 314.7,146.9 316.6,152.5 310,154.4" fill="#a4a4a4"/>
<polygon points="295,134.7 304.4,137.5 306.3,143.1 298.8,142.2" fill="#a4a4a4"/>
<polygon points="319.4,163.8 324.1,162.8 325,167.5 320.3,168.4" fill="#a4a4a4"/>
<polygon points="340,155.3 346.6,154.4 347.5,161.9 341.9,162.8" fill="#a4a4a4"/>
<polygon points="281.9,140.3 287.5,140.3 288.4,146.9 283.8,147.8" fill="#a4a4a4"/>
<polygon points="343.8,176.9 349.4,175 351.3,182.5 345.6,184.4" fill="#a4a4a4"/>
<polygon points="328.8,156.3 338.1,155.3 339.1,158.5 329.7,159.6" fill="#a4a4a4"/>
<polygon points="290.3,154.4 295.9,156.3 296.9,161.9 292.2,160" fill="#a4a4a4"/>
<polygon points="274.4,156.3 280,158.1 278.1,164.7 272.5,162.8" fill="#a4a4a4"/>
<polygon points="296.9,178.8 302.5,179.7 301.6,183.4 297.8,183.4" fill="#a4a4a4"/>
<polygon points="310.4,114.2 321.6,115.1 331.9,119.4 340.5,124.5 333.6,126.3 319.8,127.1 314.7,122" fill="#ff0000"/>
<polygon points="352.5,148 359.4,147.2 368,151.5 376.6,157.5 373.1,158.4 364.5,154.1 355.1,152.3" fill="#ff0000"/>
<polygon points="381.7,160.9 390.3,162.7 392.9,166.1 386.9,165.2 381.7,163.5" fill="#ff0000"/>
<polygon points="323.3,163.5 330.2,161.8 338.8,162.7 340.5,167 333.6,170.4 325.9,168.7" fill="#ff0000"/>
<polygon points="329.3,174.7 335.3,173 338.8,177.3 336.2,182.4 331.9,179" fill="#ff0000"/>
<polygon points="348.2,189.3 354.2,186.7 355.9,192.7 350.8,196.2" fill="#ff0000"/>
<polygon points="364.5,198.8 369.7,192.7 378.3,192.7 383.4,197.9 380,203 374.8,204.8 369.7,201.3" fill="#ff0000"/>
<polygon points="386.9,197.9 391.2,197.9 392.9,202.2 388.6,203" fill="#ff0000"/>
<polygon points="391.2,205.6 396.3,206.5 397.2,210.8 392.9,209.1" fill="#ff0000"/>
<polygon points="315.5,141.2 321.6,141.7 324.1,145.5 318.1,144.6" fill="#ff0000"/>
<polygon points="305.2,154.9 310.4,154.1 310.4,157.5 306.1,157.5" fill="#ff0000"/>
<polygon points="302.7,166.1 307,165.8 306.4,168.7 303.5,168.7" fill="#ff0000"/>
<polygon points="362.8,187.6 366.3,187.6 367.1,191 363.7,191" fill="#ff0000"/>
<polygon points="404.9,181.6 410.1,181.6 408.4,185 405.8,184.7" fill="#ff0000"/>
<polygon points="290.6,142 293.2,142 293.2,144.1 290.6,144.1" fill="#ff0000"/>
<polygon points="295.8,150.3 298.9,150.3 298.9,152.7 295.8,152.7" fill="#ff0000"/>
<polygon points="347.3,165.2 349.9,165.2 349.9,167.8 347.3,167.8" fill="#ff0000"/>
<polygon points="314.7,116.8 321.6,119.4 325,123.7 318.1,124.5 314.7,121.1" fill="#ffa500"/>
<polygon points="324.1,163.5 329.3,163 334.5,165.2 331.9,169.9 325.9,168.2" fill="#ffa500"/>
<polygon points="368.8,193.9 375.7,193.6 379.1,197.9 375.7,201.3 370.6,199.6" fill="#ffa500"/>
<polygon points="353.9,148 358.5,148 359.4,151.5 355.1,151.5" fill="#ffa500"/>
<polygon points="349.9,188.4 354.2,188.1 354.6,191.9 350.8,192.2" fill="#ffa500"/>
<polygon points="331.9,174.3 335.3,174.3 335.3,177.3 332.2,177.3" fill="#ffa500"/>
</g>
<rect x="227.5" y="201" width="1.2" height="1.2" fill="#000"/>
<rect x="228" y="217" width="1.2" height="1.2" fill="#000"/>
<rect x="227" y="229" width="1.2" height="1.2" fill="#000"/>
<rect x="225.5" y="235" width="1.2" height="1.2" fill="#000"/>
<rect x="240" y="211" width="1.2" height="1.2" fill="#000"/>
<rect x="240" y="225" width="1.2" height="1.2" fill="#000"/>
<rect x="248" y="238" width="1.2" height="1.2" fill="#000"/>
<rect x="253" y="222" width="1.2" height="1.2" fill="#000"/>
<rect x="258" y="220" width="1.2" height="1.2" fill="#000"/>
<rect x="257" y="227" width="1.2" height="1.2" fill="#000"/>
<rect x="261" y="238" width="1.2" height="1.2" fill="#000"/>
<rect x="246" y="243" width="1.2" height="1.2" fill="#000"/>
<rect x="254" y="245" width="1.2" height="1.2" fill="#000"/>
<rect x="234" y="234" width="1.2" height="1.2" fill="#00fa9a"/>
<rect x="255" y="224" width="1.2" height="1.2" fill="#00fa9a"/>
<rect x="253" y="233" width="1.2" height="1.2" fill="#00fa9a"/>
<rect x="258" y="239" width="1.2" height="1.2" fill="#00fa9a"/>
<rect x="245" y="244" width="1.2" height="1.2" fill="#00fa9a"/>
<rect x="249" y="245" width="1.2" height="1.2" fill="#00fa9a"/>
<rect x="260" y="234" width="1.2" height="1.2" fill="#00fa9a"/>
<rect x="228.5" y="200.5" width="1.2" height="1.2" fill="#00fa9a"/>
</svg>
<svg style="left:50px;top:34px;" width="445" height="325" viewBox="50 34 445 325"><path d="M78.0 102.5 h11 M83.5 97.0 v11 M78.0 183.5 h11 M83.5 178.0 v11 M78.0 265.5 h11 M83.5 260.0 v11 M78.0 346.5 h11 M83.5 341.0 v11 M158.0 102.5 h11 M163.5 97.0 v11 M158.0 183.5 h11 M163.5 178.0 v11 M158.0 265.5 h11 M163.5 260.0 v11 M158.0 346.5 h11 M163.5 341.0 v11 M238.0 102.5 h11 M243.5 97.0 v11 M238.0 183.5 h11 M243.5 178.0 v11 M238.0 265.5 h11 M243.5 260.0 v11 M238.0 346.5 h11 M243.5 341.0 v11 M318.0 102.5 h11 M323.5 97.0 v11 M318.0 183.5 h11 M323.5 178.0 v11 M318.0 265.5 h11 M323.5 260.0 v11 M318.0 346.5 h11 M323.5 341.0 v11 M398.0 102.5 h11 M403.5 97.0 v11 M398.0 183.5 h11 M403.5 178.0 v11 M398.0 265.5 h11 M403.5 260.0 v11 M398.0 346.5 h11 M403.5 341.0 v11 M478.0 102.5 h11 M483.5 97.0 v11 M478.0 183.5 h11 M483.5 178.0 v11 M478.0 265.5 h11 M483.5 260.0 v11 M478.0 346.5 h11 M483.5 341.0 v11" stroke="#f0e68c" stroke-width="1" fill="none" shape-rendering="crispEdges"/>
<g transform="translate(237.5 184)" fill="#ff00ff" stroke="none"><rect x="-2.5" y="-5" width="5" height="6"/><rect x="-1.5" y="-6.5" width="3" height="1.5"/><rect x="-5.5" y="1" width="11" height="1.5"/><path d="M-8 4.800 l2 1.600 l2 -1.600 l2 1.600 l2 -1.600 l2 1.600 l2 -1.600 l2 1.600 l2 -1.600" stroke="#ff00ff" stroke-width="1.200" fill="none"/></g>
<g transform="translate(242.8 215)" fill="#ff00ff" stroke="none"><rect x="-2.5" y="-5" width="5" height="6"/><rect x="-1.5" y="-6.5" width="3" height="1.5"/><rect x="-5.5" y="1" width="11" height="1.5"/><path d="M-8 4.800 l2 1.600 l2 -1.600 l2 1.600 l2 -1.600 l2 1.600 l2 -1.600 l2 1.600 l2 -1.600" stroke="#ff00ff" stroke-width="1.200" fill="none"/></g>
<g transform="translate(242.8 265.5)" fill="#ff00ff" stroke="none"><rect x="-2.5" y="-5" width="5" height="6"/><rect x="-1.5" y="-6.5" width="3" height="1.5"/><rect x="-5.5" y="1" width="11" height="1.5"/><path d="M-8 4.800 l2 1.600 l2 -1.600 l2 1.600 l2 -1.600 l2 1.600 l2 -1.600 l2 1.600 l2 -1.600" stroke="#ff00ff" stroke-width="1.200" fill="none"/></g>
<g transform="translate(242.8 313)" fill="#ff00ff" stroke="none"><rect x="-2.5" y="-5" width="5" height="6"/><rect x="-1.5" y="-6.5" width="3" height="1.5"/><rect x="-5.5" y="1" width="11" height="1.5"/><path d="M-8 4.800 l2 1.600 l2 -1.600 l2 1.600 l2 -1.600 l2 1.600 l2 -1.600 l2 1.600 l2 -1.600" stroke="#ff00ff" stroke-width="1.200" fill="none"/></g>
<g transform="translate(242.8 345)" fill="#ff00ff" stroke="none"><rect x="-2.5" y="-5" width="5" height="6"/><rect x="-1.5" y="-6.5" width="3" height="1.5"/><rect x="-5.5" y="1" width="11" height="1.5"/><path d="M-8 4.800 l2 1.600 l2 -1.600 l2 1.600 l2 -1.600 l2 1.600 l2 -1.600 l2 1.600 l2 -1.600" stroke="#ff00ff" stroke-width="1.200" fill="none"/></g>
<g transform="translate(485 215)" fill="#ff00ff" stroke="none"><rect x="-2.5" y="-5" width="5" height="6"/><rect x="-1.5" y="-6.5" width="3" height="1.5"/><rect x="-5.5" y="1" width="11" height="1.5"/><path d="M-8 4.800 l2 1.600 l2 -1.600 l2 1.600 l2 -1.600 l2 1.600 l2 -1.600 l2 1.600 l2 -1.600" stroke="#ff00ff" stroke-width="1.200" fill="none"/></g>
<g transform="translate(485 265.5)" fill="#ff00ff" stroke="none"><rect x="-2.5" y="-5" width="5" height="6"/><rect x="-1.5" y="-6.5" width="3" height="1.5"/><rect x="-5.5" y="1" width="11" height="1.5"/><path d="M-8 4.800 l2 1.600 l2 -1.600 l2 1.600 l2 -1.600 l2 1.600 l2 -1.600 l2 1.600 l2 -1.600" stroke="#ff00ff" stroke-width="1.200" fill="none"/></g>
<g transform="translate(485 313)" fill="#ff00ff" stroke="none"><rect x="-2.5" y="-5" width="5" height="6"/><rect x="-1.5" y="-6.5" width="3" height="1.5"/><rect x="-5.5" y="1" width="11" height="1.5"/><path d="M-8 4.800 l2 1.600 l2 -1.600 l2 1.600 l2 -1.600 l2 1.600 l2 -1.600 l2 1.600 l2 -1.600" stroke="#ff00ff" stroke-width="1.200" fill="none"/></g>
<g transform="translate(485 345)" fill="#ff00ff" stroke="none"><rect x="-2.5" y="-5" width="5" height="6"/><rect x="-1.5" y="-6.5" width="3" height="1.5"/><rect x="-5.5" y="1" width="11" height="1.5"/><path d="M-8 4.800 l2 1.600 l2 -1.600 l2 1.600 l2 -1.600 l2 1.600 l2 -1.600 l2 1.600 l2 -1.600" stroke="#ff00ff" stroke-width="1.200" fill="none"/></g>
</svg>
<span class="t hv" style="left:10.6px;top:35.22px;font-size:24.9px;">filled contour.</span>
<span class="t hv kh b17" style="left:3px;width:30.500px;text-align:right;top:87.1095px;font-size:17px;">15</span>
<span class="t hv kh b17" style="left:3px;width:30.500px;text-align:right;top:168.6095px;font-size:17px;">10</span>
<span class="t hv kh b17" style="left:3px;width:30.500px;text-align:right;top:250.1095px;font-size:17px;">5</span>
<span class="t hv kh b17" style="left:3px;width:30.500px;text-align:right;top:331.1095px;font-size:17px;">0</span>
<span class="t hv kh b17" style="left:54.0px;width:60px;text-align:center;top:358.1095px;font-size:17px;">−135</span>
<span class="t hv kh b17" style="left:134.0px;width:60px;text-align:center;top:358.1095px;font-size:17px;">−130</span>
<span class="t hv kh b17" style="left:214.0px;width:60px;text-align:center;top:358.1095px;font-size:17px;">−125</span>
<span class="t hv kh b17" style="left:294.0px;width:60px;text-align:center;top:358.1095px;font-size:17px;">−120</span>
<span class="t hv kh b17" style="left:374.0px;width:60px;text-align:center;top:358.1095px;font-size:17px;">−115</span>
<span class="t hv kh b17" style="left:454.0px;width:60px;text-align:center;top:358.1095px;font-size:17px;">−110</span>
<div class="gl" style="left:486px;top:34px;width:86px;height:1px;"></div>
<span class="t hv b17" style="left:489.5px;top:32.11px;font-size:17px;">ir</span>
<div style="left:489px;top:60px;width:10px;height:95px;background:linear-gradient(#000,#c8c8c8);"></div>
<div style="left:489px;top:155px;width:10px;height:16px;background:#0000ff;"></div>
<div style="left:489px;top:171px;width:10px;height:1px;background:#fff;"></div>
<div style="left:489px;top:172px;width:10px;height:4.5px;background:#ff0000;"></div>
<div style="left:489px;top:176.5px;width:10px;height:3.5px;background:#ffa500;"></div>
<div style="left:489px;top:180px;width:10px;height:4px;background:#ffc0cb;"></div>
<div style="left:489px;top:184px;width:10px;height:4px;background:#ffff00;"></div>
<span class="t hv b17" style="left:504.5px;top:53.11px;font-size:17px;">387.0</span>
<span class="t hv b17" style="left:504.5px;top:75.51px;font-size:17px;">351.0</span>
<span class="t hv b17" style="left:504.5px;top:97.91px;font-size:17px;">315.0</span>
<span class="t hv b17" style="left:504.5px;top:120.31px;font-size:17px;">279.0</span>
<span class="t hv b17" style="left:504.5px;top:142.71px;font-size:17px;">243.0</span>
<span class="t hv b17" style="left:504.5px;top:165.11px;font-size:17px;">207.0</span>
<div class="gl" style="left:486px;top:237px;width:86px;height:1px;"></div>
<span class="t hv b17" style="left:489.5px;top:242.91px;font-size:17px;">maxdz</span>
<div style="left:489px;top:263px;width:10px;height:28px;background:#b22222;"></div>
<div style="left:489px;top:291px;width:10px;height:28px;background:#ffa07a;"></div>
<div style="left:489px;top:319px;width:10px;height:28px;background:#fafa82;"></div>
<div style="left:489px;top:347px;width:10px;height:28px;background:#00fa9a;"></div>
<span class="t hv b17" style="left:505px;top:269.81px;font-size:17px;">55.0</span>
<span class="t hv b17" style="left:505px;top:297.91px;font-size:17px;">45.0</span>
<span class="t hv b17" style="left:505px;top:326.01px;font-size:17px;">35.0</span>
<span class="t hv b17" style="left:505px;top:354.11px;font-size:17px;">25.0</span>
<div class="gl" style="left:486px;top:375px;width:86px;height:1px;"></div>
<div class="ico" style="left:5px;top:376px;width:46px;height:48px;"></div><svg style="left:5px;top:376px;" width="46" height="48" viewBox="0 0 46 48"><path d="M7 13 C10 8.500 14 7 18 8 C23 9.300 27 12 31 11.500 C34 11 36 9.500 38.500 7.500 L38.500 9 L10.500 38.300 C13 36.500 16 36 19 37 C24 38.500 27 40.300 31 39.800 C35 39.300 37.500 37.300 39.500 34.500 L40 35.500 C38 39.500 34 41.800 30 41.800 C25 41.800 21 39.600 16 39.100 C12 38.700 9 39.800 6.500 41 L6.500 39.500 L35.500 10.800 C33 12.800 30 13.600 27 13.300 C23 12.800 20 10.300 16 9.800 C12.500 9.400 10 10.700 7.500 14 Z" fill="#ffff00"/></svg>
<div class="ico" style="left:52px;top:376px;width:46px;height:48px;width:46px;height:48px;"></div><svg style="left:52px;top:376px;" width="46" height="48" viewBox="0 0 46 48"><text x="3" y="14.300" font-family="Liberation Sans,sans-serif" font-weight="bold" font-size="14" fill="#ffff00" textLength="30" lengthAdjust="spacingAndGlyphs">GOES</text><path d="M3.200 17.500 C14 16.500 23 25 23.700 36 L23.700 43.600 L3.200 43.600 Z" fill="url(#sty)"/><path d="M3.200 37 h7 l2 2 v4.600 h-9 z M13.500 23.500 l3 -2 l5 3 l1 7 l-6 1 l-3.500 -4 z M3.200 17.500 l4 0 l2 3 l-3 3 l-3 -1 z" fill="#ffff00"/><path d="M22 25.400 L38.500 22 M23.700 31.900 L38 23.500" stroke="#ffff00" stroke-width="1.100" stroke-dasharray="1.200 1.800" fill="none"/><path d="M40.700 18 l3 3.300 l-3 3.300 l-3 -3.300 z" fill="#ffff00"/><g fill="#ffff00"><rect x="18.500" y="16.800" width="1.200" height="1.200"/><rect x="24" y="19.500" width="1.200" height="1.200"/><rect x="31" y="19.500" width="1.200" height="1.200"/><rect x="38.500" y="29.500" width="1.200" height="1.200"/><rect x="35" y="32" width="1.200" height="1.200"/><rect x="24.800" y="41.800" width="1.200" height="1.200"/></g><text x="28" y="43" font-family="Liberation Sans,sans-serif" font-size="10.500" fill="#ffff00" textLength="11" lengthAdjust="spacingAndGlyphs">IR</text></svg>
<div class="ico" style="left:99px;top:376px;width:46px;height:48px;width:46px;height:48px;"></div><svg style="left:99px;top:376px;" width="46" height="48" viewBox="0 0 46 48"><g transform="translate(0 0) scale(1.0)"><path d="M5.5 9 C7 18 14 27 27.5 31.5" stroke="#ffff00" stroke-width="2" fill="none"/><path d="M11.400 21 L16 21.500 L14 26.500 M13.200 22 L12.800 31" stroke="#ffff00" stroke-width="1.300" fill="none"/><path d="M11.500 29.500 L14.500 29.500 L16 35.500 L16 39.600 L9 39.600 L9 35.500 Z" fill="#ffff00"/></g><text x="32.800" y="16.8" font-family="Liberation Sans,sans-serif" font-size="14" fill="#ffff00" textLength="6.500" lengthAdjust="spacingAndGlyphs">S</text><text x="32.800" y="28.5" font-family="Liberation Sans,sans-serif" font-size="14" fill="#ffff00" textLength="6.500" lengthAdjust="spacingAndGlyphs">U</text><text x="32.800" y="40.2" font-family="Liberation Sans,sans-serif" font-size="14" fill="#ffff00" textLength="6.500" lengthAdjust="spacingAndGlyphs">R</text></svg>
<div class="ico g" style="left:146px;top:376px;width:46px;height:48px;width:46px;height:48px;"></div><svg style="left:146px;top:376px;" width="46" height="48" viewBox="0 0 46 48"><path d="M5.40 5.3 v37.2 M14.28 5.3 v37.2 M23.15 5.3 v37.2 M32.02 5.3 v37.2 M40.90 5.3 v37.2 M5.4 5.30 h35.5 M5.4 14.60 h35.5 M5.4 23.90 h35.5 M5.4 33.20 h35.5 M5.4 42.50 h35.5 " stroke="#e0e0e0" stroke-width="1.200" fill="none"/><g transform="translate(7 0) scale(1)"><path d="M5.5 9 C7 18 14 27 27.5 31.5" stroke="#e0e0e0" stroke-width="2" fill="none"/><path d="M11.400 21 L16 21.500 L14 26.500 M13.200 22 L12.800 31" stroke="#e0e0e0" stroke-width="1.300" fill="none"/><path d="M11.500 29.500 L14.500 29.500 L16 35.500 L16 39.600 L9 39.600 L9 35.500 Z" fill="#e0e0e0"/></g></svg>
<div class="ico g" style="left:193px;top:376px;width:14px;height:48px;width:14px;height:48px;"></div><svg style="left:193px;top:376px;" width="14" height="48" viewBox="0 0 14 48"><text x="7" y="11.5" font-family="Liberation Sans,sans-serif" font-size="6.500" fill="#e0e0e0" text-anchor="middle" font-weight="bold">B</text><text x="7" y="17.6" font-family="Liberation Sans,sans-serif" font-size="6.500" fill="#e0e0e0" text-anchor="middle" font-weight="bold">O</text><text x="7" y="23.7" font-family="Liberation Sans,sans-serif" font-size="6.500" fill="#e0e0e0" text-anchor="middle" font-weight="bold">U</text><text x="7" y="29.799999999999997" font-family="Liberation Sans,sans-serif" font-size="6.500" fill="#e0e0e0" text-anchor="middle" font-weight="bold">N</text><text x="7" y="35.9" font-family="Liberation Sans,sans-serif" font-size="6.500" fill="#e0e0e0" text-anchor="middle" font-weight="bold">D</text><text x="7" y="42.0" font-family="Liberation Sans,sans-serif" font-size="6.500" fill="#e0e0e0" text-anchor="middle" font-weight="bold">S</text></svg>
<div class="ico" style="left:208px;top:400px;width:22px;height:24px;width:22px;height:24px;"></div><svg style="left:208px;top:400px;" width="22" height="24" viewBox="0 0 22 24"><path d="M3.5 4.5 v15 M8.5 4.5 v15 M13.5 4.5 v15 M18.5 4.5 v15 M3.500 4.5 h15 M3.500 9.5 h15 M3.500 14.5 h15 M3.500 19.5 h15 " stroke="#ffff00" stroke-width="1.200" fill="none"/></svg>
<div class="ico" style="left:231px;top:376px;width:21px;height:48px;width:21px;height:48px;"></div><svg style="left:231px;top:376px;" width="21" height="48" viewBox="0 0 21 48"><path d="M3 5 l4 -1.500 l-1 3 l2 2 l-2 1 l0 4 l-2 -3 z M9 6 l3 -1 l2 0 l3 -1.500 l-1 2 l-2 1 l2 3 l-2 4 l-1 -4 l-3 -2 z" fill="#ffff00"/><text x="7.500" y="24.9" font-family="Liberation Sans,sans-serif" font-size="9" fill="#ffff00" textLength="6" lengthAdjust="spacingAndGlyphs">M</text><text x="7.500" y="32.699999999999996" font-family="Liberation Sans,sans-serif" font-size="9" fill="#ffff00" textLength="6" lengthAdjust="spacingAndGlyphs">A</text><text x="7.500" y="40.5" font-family="Liberation Sans,sans-serif" font-size="9" fill="#ffff00" textLength="6" lengthAdjust="spacingAndGlyphs">P</text></svg>
<div class="ico g" style="left:253px;top:376px;width:21px;height:48px;width:21px;height:48px;"></div><svg style="left:253px;top:376px;" width="21" height="48" viewBox="0 0 21 48"><g stroke="#e0e0e0" stroke-width="1.100" fill="none" transform="translate(10.5 23.5) scale(1 1.22)"><circle cx="0" cy="0" r="7.800"/><circle cx="0" cy="0" r="5.200"/><circle cx="0" cy="0" r="2.400"/><path d="M-7.800 0 h5.400 M2.400 0 h5.400 M0 -7.800 v5.400 M0 2.400 v5.400 M-5.500 -5.500 l3.800 3.800 M5.500 -5.500 l-3.800 3.800 M-5.500 5.500 l3.800 -3.800 M5.500 5.500 l-3.800 -3.800"/></g></svg>
<div class="ico" style="left:275px;top:400px;width:22px;height:24px;width:22px;height:24px;"></div><svg style="left:275px;top:400px;" width="22" height="24" viewBox="0 0 22 24"><rect x="8.500" y="5.500" width="5" height="6" fill="#ffff00"/><rect x="9.500" y="4" width="3" height="1.500" fill="#ffff00"/><rect x="10" y="11.500" width="2" height="3.500" fill="#ffff00"/><path d="M6 17.500 C7 15.500 9 14.500 11 14.500 C13 14.500 15 15.500 16 17.500 Z" fill="#ffff00"/><path d="M3 17 l2 1.600 l2 -1.600 l2 1.600 l2 -1.600 l2 1.600 l2 -1.600 l2 1.600 l2 -1.600" stroke="#ffff00" stroke-width="1.200" fill="none"/></svg>
<div class="ico g" style="left:298px;top:376px;width:46px;height:48px;width:46px;height:48px;"></div><svg style="left:298px;top:376px;" width="46" height="48" viewBox="0 0 46 48"><g stroke="#e0e0e0" stroke-width="1.200" fill="none"><path d="M6 32 L39 32 L36.500 38 L9 38 Z"/><path d="M8.500 32 V24.500 H12 L13.500 32"/><circle cx="22" cy="22.500" r="3"/><path d="M21 25.500 v6.500 M23 25.500 v6.500 M34.500 16 v16"/></g><path d="M3 43 V40 l2.500 -1.500 l2.500 1.500 l2.500 -1.500 l2.500 1.500 l2.500 -1.500 l2.500 1.500 l2.500 -1.500 l2.500 1.500 l2.500 -1.500 l2.500 1.500 l2.500 -1.500 l2.500 1.500 l2.500 -1.500 l2.500 1.500 l2.500 -1.500 l2.500 1.500 V43 Z" fill="#e0e0e0"/></svg>

<div style="left:0px;top:427px;width:5px;height:444px;background:#0000cd;"></div>
<div class="blk" style="left:5px;top:427px;width:569px;height:444px;"></div>
<div class="dv" style="left:4px;top:427px;width:0px;height:444px;"></div>
<div class="dv" style="left:573px;top:427px;width:0px;height:444px;"></div>
<div class="dh" style="left:5px;top:871px;width:569px;height:0px;"></div>
<span class="t hv y" style="left:15px;top:428.02px;font-size:23.6px;">22<i class="hy" style="transform:scaleX(2.25);margin:0 3.1px;">-</i>aug<i class="hy" style="transform:scaleX(2.25);margin:0 3.1px;">-</i>1997,00:05:00</span>
<span class="t hv" style="left:272.5px;top:427.23px;font-size:23.95px;">maxdz plot.  maxdz plot.</span>
<svg style="left:55px;top:458px;" width="432" height="337" viewBox="55 458 432 337">
<g stroke="#fff" stroke-width="1" fill="none">
<circle cx="273.6" cy="629.3" r="27.9"/>
<circle cx="273.6" cy="629.3" r="55.9"/>
<circle cx="273.6" cy="629.3" r="83.8"/>
<circle cx="273.6" cy="629.3" r="111.8"/>
<circle cx="273.6" cy="629.3" r="139.8"/>
<circle cx="273.6" cy="629.3" r="167.7"/>
<circle cx="273.6" cy="629.3" r="195.7"/>
<circle cx="273.6" cy="629.3" r="223.6"/>
<path d="M273.6 601.3499999999999 V405.69999999999993 M273.6 657.25 V852.9 M245.65000000000003 629.3 H50.00000000000003 M301.55 629.3 H497.20000000000005 M253.83636546583602 609.536365465836 L115.49092372668801 471.19092372668797 M293.363634534164 609.536365465836 L431.709076273312 471.19092372668797 M253.83636546583602 649.063634534164 L115.49092372668801 787.4090762733119 M293.363634534164 649.063634534164 L431.709076273312 787.4090762733119"/>
</g>
<rect x="190.7" y="540.0" width="10.5" height="7.9" fill="#00e896"/>
<rect x="227.1" y="547.9" width="7.9" height="6.2" fill="#00e896"/>
<rect x="244.7" y="564.6" width="6.2" height="6.2" fill="#00a8e8"/>
<rect x="278.1" y="573.4" width="3.9" height="4.4" fill="#00a8e8"/>
<rect x="252.6" y="590.1" width="4.4" height="4.4" fill="#00a8e8"/>
<rect x="261.4" y="588.3" width="9.7" height="4.4" fill="#00e896"/>
<rect x="243.8" y="592.7" width="6.2" height="5.3" fill="#0068e0"/>
<rect x="251.7" y="598.9" width="5.3" height="3.5" fill="#00a8e8"/>
<rect x="257.0" y="586.0" width="2.6" height="2.6" fill="#0068e0"/>
<rect x="280.7" y="598.9" width="7.0" height="4.4" fill="#00a8e8"/>
<rect x="268.4" y="601.5" width="3.2" height="3.2" fill="#0068e0"/>
<rect x="301.8" y="603.3" width="4.4" height="3.9" fill="#00a8e8"/>
<rect x="285.1" y="615.9" width="3.2" height="3.2" fill="#00704a"/>
<rect x="303.2" y="615.2" width="2.6" height="1.8" fill="#00a8e8"/>
<rect x="234.7" y="615.9" width="3.2" height="3.2" fill="#00a8e8"/>
<rect x="192.8" y="615.2" width="5.3" height="8.4" fill="#00e896"/>
<rect x="194.6" y="617.3" width="2.5" height="4.2" fill="#00704a"/>
<rect x="217.8" y="630.0" width="6.7" height="6.0" fill="#00a8e8"/>
<rect x="219.2" y="631.4" width="3.9" height="3.2" fill="#00704a"/>
<rect x="228.0" y="632.8" width="3.2" height="3.2" fill="#00a8e8"/>
<rect x="235.0" y="631.7" width="2.8" height="2.1" fill="#0068e0"/>
<rect x="239.9" y="633.5" width="4.9" height="3.5" fill="#00e896"/>
<rect x="302.7" y="629.6" width="6.7" height="5.6" fill="#00a8e8"/>
<rect x="303.6" y="631.7" width="3.5" height="3.5" fill="#00704a"/>
<rect x="347.9" y="627.0" width="2.8" height="2.5" fill="#00a8e8"/>
<rect x="342.2" y="631.7" width="8.8" height="6.7" fill="#00e896"/>
<rect x="344.0" y="633.1" width="4.4" height="3.9" fill="#00704a"/>
<rect x="288.6" y="634.0" width="6.2" height="4.9" fill="#0068e0"/>
<rect x="295.1" y="634.0" width="4.9" height="5.3" fill="#00a8e8"/>
<rect x="296.2" y="635.8" width="2.8" height="3.2" fill="#ffb060"/>
<rect x="308.8" y="638.8" width="2.5" height="2.5" fill="#0068e0"/>
<rect x="288.6" y="642.8" width="3.5" height="3.2" fill="#0068e0"/>
<rect x="247.3" y="646.3" width="3.9" height="3.9" fill="#0068e0"/>
<rect x="273.7" y="653.9" width="3.5" height="3.5" fill="#0068e0"/>
<rect x="275.1" y="657.8" width="3.2" height="3.2" fill="#00a8e8"/>
<rect x="292.1" y="652.8" width="8.8" height="4.4" fill="#0068e0"/>
<rect x="242.9" y="653.4" width="5.3" height="7.0" fill="#00a8e8"/>
<rect x="243.8" y="656.0" width="3.9" height="3.9" fill="#c8c8c8"/>
<rect x="250.5" y="657.8" width="7.0" height="3.9" fill="#00a8e8"/>
<rect x="252.6" y="661.3" width="2.6" height="2.6" fill="#00a8e8"/>
<rect x="281.6" y="660.9" width="2.5" height="2.8" fill="#0068e0"/>
<rect x="278.6" y="669.7" width="5.6" height="3.9" fill="#00a8e8"/>
<rect x="286.0" y="670.1" width="2.5" height="3.5" fill="#00a8e8"/>
<rect x="291.3" y="669.7" width="2.6" height="1.4" fill="#0068e0"/>
<rect x="252.2" y="673.9" width="6.0" height="3.9" fill="#00704a"/>
<rect x="252.6" y="673.6" width="2.8" height="2.1" fill="#00a8e8"/>
<rect x="200.2" y="666.9" width="3.9" height="4.2" fill="#00e896"/>
<rect x="192.8" y="671.8" width="5.3" height="7.9" fill="#00e896"/>
<rect x="201.3" y="673.9" width="2.1" height="3.9" fill="#00a8e8"/>
<rect x="216.0" y="673.9" width="7.9" height="9.7" fill="#00a8e8"/>
<rect x="218.3" y="673.9" width="5.6" height="5.3" fill="#00e896"/>
<rect x="305.0" y="688.0" width="6.0" height="5.3" fill="#00a8e8"/>
<rect x="319.7" y="694.3" width="8.8" height="8.4" fill="#00e896"/>
<rect x="320.3" y="696.1" width="7.4" height="5.3" fill="#c8c8c8"/>
<rect x="321.5" y="700.3" width="6.3" height="2.5" fill="#d89030"/>
<rect x="350.7" y="699.6" width="8.4" height="8.4" fill="#00704a"/>
<rect x="222.7" y="697.8" width="10.5" height="5.3" fill="#00e896"/>
<rect x="224.5" y="700.3" width="7.0" height="5.6" fill="#00704a"/>
<rect x="231.9" y="702.6" width="9.1" height="5.3" fill="#00e896"/>
<rect x="178.8" y="703.1" width="8.4" height="7.4" fill="#00e896"/>
<rect x="288.6" y="714.0" width="5.6" height="6.0" fill="#00e896"/>
<rect x="355.9" y="716.6" width="7.0" height="3.3" fill="#00e896"/>
<rect x="312.4" y="640.2" width="14.1" height="7.9" fill="#00a8e8"/>
<rect x="319.4" y="640.2" width="15.8" height="10.5" fill="#00e896"/>
<rect x="328.2" y="649.0" width="12.0" height="8.8" fill="#00e896"/>
<rect x="331.7" y="655.1" width="7.9" height="4.9" fill="#00704a"/>
<rect x="335.2" y="663.0" width="9.7" height="11.4" fill="#00e896"/>
<rect x="337.0" y="665.7" width="6.2" height="7.0" fill="#00704a"/>
<rect x="347.9" y="675.0" width="5.3" height="4.9" fill="#00e896"/>
<rect x="347.9" y="682.7" width="3.2" height="3.2" fill="#00e896"/>
<rect x="341.9" y="639.8" width="3.2" height="6.2" fill="#00e896"/>
<rect x="274.2" y="636.4" width="1.5" height="2" fill="#2038e0"/>
<rect x="267.0" y="630.2" width="1.5" height="2" fill="#2038e0"/>
<rect x="247.9" y="647.6" width="1.5" height="2" fill="#2038e0"/>
<rect x="277.1" y="649.1" width="1.5" height="2" fill="#0068e0"/>
<rect x="278.9" y="601.0" width="1.5" height="2" fill="#0068e0"/>
<rect x="280.7" y="660.3" width="1.5" height="2" fill="#0068e0"/>
<rect x="276.7" y="620.0" width="1.5" height="2" fill="#0068e0"/>
<rect x="266.2" y="658.4" width="1.5" height="2" fill="#0068e0"/>
<rect x="292.6" y="640.8" width="1.5" height="2" fill="#2038e0"/>
<rect x="264.3" y="629.0" width="1.5" height="2" fill="#2038e0"/>
<rect x="267.5" y="661.1" width="1.5" height="2" fill="#0068e0"/>
<rect x="286.3" y="629.9" width="1.5" height="2" fill="#0068e0"/>
<rect x="284.7" y="613.6" width="1.5" height="2" fill="#2038e0"/>
<rect x="262.4" y="635.1" width="1.5" height="2" fill="#2038e0"/>
<rect x="280.6" y="640.5" width="1.5" height="2" fill="#2038e0"/>
<rect x="289.2" y="638.0" width="1.5" height="2" fill="#0068e0"/>
<rect x="250.3" y="626.5" width="1.5" height="2" fill="#0068e0"/>
<rect x="288.4" y="648.4" width="1.5" height="2" fill="#2038e0"/>
<rect x="265.0" y="634.6" width="1.5" height="2" fill="#2038e0"/>
<rect x="271.2" y="643.8" width="1.5" height="2" fill="#0068e0"/>
<rect x="267.0" y="621.9" width="1.5" height="2" fill="#0068e0"/>
<rect x="278.3" y="632.8" width="1.5" height="2" fill="#7000f0"/>
<rect x="269.9" y="650.4" width="1.5" height="2" fill="#7000f0"/>
<rect x="296.7" y="651.5" width="1.5" height="2" fill="#0068e0"/>
<rect x="268.5" y="630.6" width="1.5" height="2" fill="#2038e0"/>
<rect x="299.5" y="609.4" width="1.5" height="2" fill="#0068e0"/>
<rect x="223.4" y="498.9" width="6.3" height="8.2" fill="#00e896"/>
<rect x="190.3" y="535.1" width="10.9" height="11.8" fill="#00e896"/>
<rect x="193.9" y="539.7" width="6.3" height="6.3" fill="#00704a"/>
<rect x="226.6" y="547.8" width="8.2" height="6.3" fill="#00e896"/>
<rect x="244.7" y="564.1" width="6.3" height="6.3" fill="#00a8e8"/>
<rect x="192.1" y="614.9" width="6.3" height="10.0" fill="#00e896"/>
<rect x="397.8" y="674.7" width="3.6" height="11.8" fill="#00e896"/>
<rect x="179.0" y="701.0" width="8.2" height="10.0" fill="#00e896"/>
<rect x="343.5" y="720.0" width="10.0" height="14.5" fill="#00704a"/>
<rect x="355.7" y="716.4" width="8.2" height="8.2" fill="#00e896"/>
<rect x="335.3" y="663.3" width="10.0" height="11.8" fill="#00e896"/>
<rect x="337.6" y="665.6" width="5.4" height="7.2" fill="#00704a"/>
<rect x="346.6" y="674.7" width="4.5" height="5.4" fill="#00e896"/>
<rect x="348.9" y="683.7" width="3.6" height="4.5" fill="#00e896"/>
<rect x="340.7" y="631.6" width="10.0" height="6.3" fill="#00e896"/>
<rect x="277.3" y="728.1" width="9.1" height="10.0" fill="#00e896"/>
<rect x="280.9" y="726.8" width="6.3" height="6.3" fill="#00e896"/>
<rect x="284.5" y="741.7" width="8.2" height="10.0" fill="#c8c8c8"/>
<rect x="290.0" y="751.7" width="13.6" height="10.0" fill="#00e896"/>
<rect x="304.5" y="741.7" width="12.7" height="10.0" fill="#00e896"/>
<rect x="319.9" y="748.1" width="13.6" height="9.1" fill="#00e896"/>
<rect x="351.2" y="699.6" width="8.2" height="8.2" fill="#00704a"/>
<rect x="287.3" y="713.2" width="6.3" height="6.3" fill="#00e896"/>
<rect x="192.6" y="672.4" width="6.3" height="7.2" fill="#00e896"/>
<rect x="201.6" y="665.6" width="2.7" height="6.3" fill="#00e896"/>
<path d="M315 643.500 L337 654" stroke="#fff" stroke-width="2.500"/>
<circle cx="271.600" cy="614.300" r="7.400" stroke="#ffa500" stroke-width="1" fill="none"/>
<text x="259" y="630.500" font-family="Liberation Sans,sans-serif" font-size="5.500" fill="#ffa500">b-○-1✕-8</text>
<path d="M265 631 h16 l-2 3.500 h-12 z M270 628.500 h7 v2.500 h-7 z" fill="#ff0000"/>
</svg>
<svg style="left:225px;top:450px;" width="40" height="30" viewBox="225 450 40 30"><circle cx="241.200" cy="459.500" r="7" stroke="#ffa500" stroke-width="1" fill="none"/><text x="230.500" y="474" font-family="Liberation Sans,sans-serif" font-size="5.500" fill="#ffa500">vhc-met</text></svg>
<span class="t hv" style="left:15.5px;top:457.56px;font-size:24.5px;">rhb_met track.</span>
<div class="gl" style="left:488px;top:458.5px;width:86px;height:1px;"></div>
<span class="t hv b17" style="left:490.3px;top:456.11px;font-size:17px;">maxdz</span>
<div style="left:490px;top:485.0px;width:10px;height:7px;background:#fa8080;"></div>
<div style="left:490px;top:492.0px;width:10px;height:7px;background:#ff9494;"></div>
<div style="left:490px;top:499.0px;width:10px;height:7px;background:#ffb060;"></div>
<div style="left:490px;top:506.0px;width:10px;height:7px;background:#ffd8b0;"></div>
<div style="left:490px;top:513.0px;width:10px;height:7px;background:#fad818;"></div>
<div style="left:490px;top:520.0px;width:10px;height:7px;background:#ecb420;"></div>
<div style="left:490px;top:527.0px;width:10px;height:7px;background:#d89030;"></div>
<div style="left:490px;top:534.0px;width:10px;height:7px;background:#c8c8c8;"></div>
<div style="left:490px;top:541.0px;width:10px;height:7px;background:#00704a;"></div>
<div style="left:490px;top:548.0px;width:10px;height:7px;background:#00e896;"></div>
<div style="left:490px;top:555.0px;width:10px;height:7px;background:#00b0e0;"></div>
<div style="left:490px;top:562.0px;width:10px;height:7px;background:#0068e0;"></div>
<div style="left:490px;top:569.0px;width:10px;height:7px;background:#2038e0;"></div>
<div style="left:490px;top:576.0px;width:10px;height:7px;background:#4818e8;"></div>
<div style="left:490px;top:583.0px;width:10px;height:7px;background:#7000f0;"></div>
<div style="left:490px;top:590.0px;width:10px;height:7px;background:#9000f8;"></div>
<span class="t hv b17" style="left:505.3px;top:477.91px;font-size:17px;">65.0</span>
<span class="t hv b17" style="left:505.3px;top:505.91px;font-size:17px;">45.0</span>
<span class="t hv b17" style="left:505.3px;top:533.91px;font-size:17px;">25.0</span>
<span class="t hv b17" style="left:505.3px;top:561.91px;font-size:17px;">5.0</span>
<span class="t hv b17" style="left:505.3px;top:589.91px;font-size:17px;">−15.0</span>
<div class="gl" style="left:488px;top:626.5px;width:86px;height:1px;"></div>
<span class="t hv b17" style="left:490.3px;top:624.11px;font-size:17px;">maxdz</span>
<div style="left:490px;top:653.0px;width:10px;height:7px;background:#fa8080;"></div>
<div style="left:490px;top:660.0px;width:10px;height:7px;background:#ff9494;"></div>
<div style="left:490px;top:667.0px;width:10px;height:7px;background:#ffb060;"></div>
<div style="left:490px;top:674.0px;width:10px;height:7px;background:#ffd8b0;"></div>
<div style="left:490px;top:681.0px;width:10px;height:7px;background:#fad818;"></div>
<div style="left:490px;top:688.0px;width:10px;height:7px;background:#ecb420;"></div>
<div style="left:490px;top:695.0px;width:10px;height:7px;background:#d89030;"></div>
<div style="left:490px;top:702.0px;width:10px;height:7px;background:#c8c8c8;"></div>
<div style="left:490px;top:709.0px;width:10px;height:7px;background:#00704a;"></div>
<div style="left:490px;top:716.0px;width:10px;height:7px;background:#00e896;"></div>
<div style="left:490px;top:723.0px;width:10px;height:7px;background:#00b0e0;"></div>
<div style="left:490px;top:730.0px;width:10px;height:7px;background:#0068e0;"></div>
<div style="left:490px;top:737.0px;width:10px;height:7px;background:#2038e0;"></div>
<div style="left:490px;top:744.0px;width:10px;height:7px;background:#4818e8;"></div>
<div style="left:490px;top:751.0px;width:10px;height:7px;background:#7000f0;"></div>
<div style="left:490px;top:758.0px;width:10px;height:7px;background:#9000f8;"></div>
<span class="t hv b17" style="left:505.3px;top:645.91px;font-size:17px;">65.0</span>
<span class="t hv b17" style="left:505.3px;top:673.91px;font-size:17px;">45.0</span>
<span class="t hv b17" style="left:505.3px;top:701.91px;font-size:17px;">25.0</span>
<span class="t hv b17" style="left:505.3px;top:729.91px;font-size:17px;">5.0</span>
<span class="t hv b17" style="left:505.3px;top:757.91px;font-size:17px;">−15.0</span>
<div class="gl" style="left:488px;top:794.5px;width:86px;height:1px;"></div>
<div class="gl" style="left:488px;top:819.5px;width:86px;height:1px;"></div>
<span class="t hv" style="left:489.5px;top:799.11px;font-size:10.5px;color:#ff0000;-webkit-text-stroke:0.25px #ff0000;">rhb_met</span>
<span class="t hv" style="left:5.5px;top:802.92px;font-size:6px;color:#f0e68c;">25</span>
<span class="t hv" style="left:381px;top:839.77px;font-size:23.9px;">Alt: 0.50 km MSL</span>
<div class="ico" style="left:10px;top:821px;width:46px;height:48px;"></div><svg style="left:10px;top:821px;" width="46" height="48" viewBox="0 0 46 48"><path d="M7 13 C10 8.500 14 7 18 8 C23 9.300 27 12 31 11.500 C34 11 36 9.500 38.500 7.500 L38.500 9 L10.500 38.300 C13 36.500 16 36 19 37 C24 38.500 27 40.300 31 39.800 C35 39.300 37.500 37.300 39.500 34.500 L40 35.500 C38 39.500 34 41.800 30 41.800 C25 41.800 21 39.600 16 39.100 C12 38.700 9 39.800 6.500 41 L6.500 39.500 L35.500 10.800 C33 12.800 30 13.600 27 13.300 C23 12.800 20 10.300 16 9.800 C12.500 9.400 10 10.700 7.500 14 Z" fill="#ffff00"/></svg>
<div class="ico g" style="left:57px;top:821px;width:46px;height:48px;width:46px;height:48px;"></div><svg style="left:57px;top:821px;" width="46" height="48" viewBox="0 0 46 48"><text x="3" y="14.300" font-family="Liberation Sans,sans-serif" font-weight="bold" font-size="14" fill="#e0e0e0" textLength="30" lengthAdjust="spacingAndGlyphs">GOES</text><path d="M3.200 17.500 C14 16.500 23 25 23.700 36 L23.700 43.600 L3.200 43.600 Z" fill="url(#stg)"/><path d="M3.200 37 h7 l2 2 v4.600 h-9 z M13.500 23.500 l3 -2 l5 3 l1 7 l-6 1 l-3.500 -4 z M3.200 17.500 l4 0 l2 3 l-3 3 l-3 -1 z" fill="#e0e0e0"/><path d="M22 25.400 L38.500 22 M23.700 31.900 L38 23.500" stroke="#e0e0e0" stroke-width="1.100" stroke-dasharray="1.200 1.800" fill="none"/><path d="M40.700 18 l3 3.300 l-3 3.300 l-3 -3.300 z" fill="#e0e0e0"/><g fill="#e0e0e0"><rect x="18.500" y="16.800" width="1.200" height="1.200"/><rect x="24" y="19.500" width="1.200" height="1.200"/><rect x="31" y="19.500" width="1.200" height="1.200"/><rect x="38.500" y="29.500" width="1.200" height="1.200"/><rect x="35" y="32" width="1.200" height="1.200"/><rect x="24.800" y="41.800" width="1.200" height="1.200"/></g><text x="28" y="43" font-family="Liberation Sans,sans-serif" font-size="10.500" fill="#e0e0e0" textLength="11" lengthAdjust="spacingAndGlyphs">IR</text></svg>
<div class="ico" style="left:104px;top:821px;width:46px;height:48px;width:46px;height:48px;"></div><svg style="left:104px;top:821px;" width="46" height="48" viewBox="0 0 46 48"><g transform="translate(0 0) scale(1.0)"><path d="M5.5 9 C7 18 14 27 27.5 31.5" stroke="#ffff00" stroke-width="2" fill="none"/><path d="M11.400 21 L16 21.500 L14 26.500 M13.200 22 L12.800 31" stroke="#ffff00" stroke-width="1.300" fill="none"/><path d="M11.500 29.500 L14.500 29.500 L16 35.500 L16 39.600 L9 39.600 L9 35.500 Z" fill="#ffff00"/></g><text x="32.800" y="16.8" font-family="Liberation Sans,sans-serif" font-size="14" fill="#ffff00" textLength="6.500" lengthAdjust="spacingAndGlyphs">S</text><text x="32.800" y="28.5" font-family="Liberation Sans,sans-serif" font-size="14" fill="#ffff00" textLength="6.500" lengthAdjust="spacingAndGlyphs">U</text><text x="32.800" y="40.2" font-family="Liberation Sans,sans-serif" font-size="14" fill="#ffff00" textLength="6.500" lengthAdjust="spacingAndGlyphs">R</text></svg>
<div class="ico" style="left:151px;top:821px;width:46px;height:48px;width:46px;height:48px;"></div><svg style="left:151px;top:821px;" width="46" height="48" viewBox="0 0 46 48"><path d="M5.40 5.3 v37.2 M14.28 5.3 v37.2 M23.15 5.3 v37.2 M32.02 5.3 v37.2 M40.90 5.3 v37.2 M5.4 5.30 h35.5 M5.4 14.60 h35.5 M5.4 23.90 h35.5 M5.4 33.20 h35.5 M5.4 42.50 h35.5 " stroke="#ffff00" stroke-width="1.200" fill="none"/><g transform="translate(7 0) scale(1)"><path d="M5.5 9 C7 18 14 27 27.5 31.5" stroke="#ffff00" stroke-width="2" fill="none"/><path d="M11.400 21 L16 21.500 L14 26.500 M13.200 22 L12.800 31" stroke="#ffff00" stroke-width="1.300" fill="none"/><path d="M11.500 29.500 L14.500 29.500 L16 35.500 L16 39.600 L9 39.600 L9 35.500 Z" fill="#ffff00"/></g></svg>
<div class="ico" style="left:198px;top:821px;width:14px;height:48px;width:14px;height:48px;"></div><svg style="left:198px;top:821px;" width="14" height="48" viewBox="0 0 14 48"><text x="7" y="11.5" font-family="Liberation Sans,sans-serif" font-size="6.500" fill="#ffff00" text-anchor="middle" font-weight="bold">B</text><text x="7" y="17.6" font-family="Liberation Sans,sans-serif" font-size="6.500" fill="#ffff00" text-anchor="middle" font-weight="bold">O</text><text x="7" y="23.7" font-family="Liberation Sans,sans-serif" font-size="6.500" fill="#ffff00" text-anchor="middle" font-weight="bold">U</text><text x="7" y="29.799999999999997" font-family="Liberation Sans,sans-serif" font-size="6.500" fill="#ffff00" text-anchor="middle" font-weight="bold">N</text><text x="7" y="35.9" font-family="Liberation Sans,sans-serif" font-size="6.500" fill="#ffff00" text-anchor="middle" font-weight="bold">D</text><text x="7" y="42.0" font-family="Liberation Sans,sans-serif" font-size="6.500" fill="#ffff00" text-anchor="middle" font-weight="bold">S</text></svg>
<div class="ico" style="left:213px;top:845px;width:22px;height:24px;width:22px;height:24px;"></div><svg style="left:213px;top:845px;" width="22" height="24" viewBox="0 0 22 24"><path d="M3.5 4.5 v15 M8.5 4.5 v15 M13.5 4.5 v15 M18.5 4.5 v15 M3.500 4.5 h15 M3.500 9.5 h15 M3.500 14.5 h15 M3.500 19.5 h15 " stroke="#ffff00" stroke-width="1.200" fill="none"/></svg>
<div class="ico" style="left:236px;top:821px;width:21px;height:48px;width:21px;height:48px;"></div><svg style="left:236px;top:821px;" width="21" height="48" viewBox="0 0 21 48"><path d="M3 5 l4 -1.500 l-1 3 l2 2 l-2 1 l0 4 l-2 -3 z M9 6 l3 -1 l2 0 l3 -1.500 l-1 2 l-2 1 l2 3 l-2 4 l-1 -4 l-3 -2 z" fill="#ffff00"/><text x="7.500" y="24.9" font-family="Liberation Sans,sans-serif" font-size="9" fill="#ffff00" textLength="6" lengthAdjust="spacingAndGlyphs">M</text><text x="7.500" y="32.699999999999996" font-family="Liberation Sans,sans-serif" font-size="9" fill="#ffff00" textLength="6" lengthAdjust="spacingAndGlyphs">A</text><text x="7.500" y="40.5" font-family="Liberation Sans,sans-serif" font-size="9" fill="#ffff00" textLength="6" lengthAdjust="spacingAndGlyphs">P</text></svg>
<div class="ico" style="left:258px;top:821px;width:21px;height:48px;width:21px;height:48px;"></div><svg style="left:258px;top:821px;" width="21" height="48" viewBox="0 0 21 48"><g stroke="#ffff00" stroke-width="1.100" fill="none" transform="translate(10.5 23.5) scale(1 1.22)"><circle cx="0" cy="0" r="7.800"/><circle cx="0" cy="0" r="5.200"/><circle cx="0" cy="0" r="2.400"/><path d="M-7.800 0 h5.400 M2.400 0 h5.400 M0 -7.800 v5.400 M0 2.400 v5.400 M-5.500 -5.500 l3.800 3.800 M5.500 -5.500 l-3.800 3.800 M-5.500 5.500 l3.800 -3.800 M5.500 5.500 l-3.800 -3.800"/></g></svg>
<div class="ico" style="left:280px;top:845px;width:22px;height:24px;width:22px;height:24px;"></div><svg style="left:280px;top:845px;" width="22" height="24" viewBox="0 0 22 24"><circle cx="11" cy="12.500" r="6.500" stroke="#ffff00" stroke-width="1.200" fill="none"/></svg>
<div class="ico" style="left:303px;top:821px;width:46px;height:48px;width:46px;height:48px;"></div><svg style="left:303px;top:821px;" width="46" height="48" viewBox="0 0 46 48"><g stroke="#ffff00" stroke-width="1.200" fill="none"><path d="M6 32 L39 32 L36.500 38 L9 38 Z"/><path d="M8.500 32 V24.500 H12 L13.500 32"/><circle cx="22" cy="22.500" r="3"/><path d="M21 25.500 v6.500 M23 25.500 v6.500 M34.500 16 v16"/></g><path d="M3 43 V40 l2.500 -1.500 l2.500 1.500 l2.500 -1.500 l2.500 1.500 l2.500 -1.500 l2.500 1.500 l2.500 -1.500 l2.500 1.500 l2.500 -1.500 l2.500 1.500 l2.500 -1.500 l2.500 1.500 l2.500 -1.500 l2.500 1.500 l2.500 -1.500 l2.500 1.500 V43 Z" fill="#ffff00"/></svg>

<div class="teal" style="left:1150px;top:91px;width:102px;height:662px;"></div>
<div style="left:1150px;top:91px;width:102px;height:20.5px;background:#006400;"></div>
<div class="dh" style="left:1150px;top:91px;width:102px;height:0px;"></div>
<div class="dh" style="left:1150px;top:752px;width:102px;height:0px;"></div>
<div class="dv" style="left:1150px;top:91px;width:0px;height:662px;"></div>
<div class="dv" style="left:1251px;top:91px;width:0px;height:662px;"></div>
<div class="dh" style="left:1150px;top:111px;width:102px;height:0px;"></div>
<div style="left:1153.0px;top:94px;width:15px;height:15px;border:1px solid #e0e0e0;"></div>
<div style="left:1156px;top:97px;width:9px;height:9px;background:#dcdcdc;border-radius:50%;"></div>
<div style="left:1172.0px;top:94px;width:15px;height:15px;border:1px solid #e0e0e0;"></div>
<div style="left:1175.5px;top:97px;width:8px;height:10px;border:1px solid #e0e0e0;"></div>
<div style="left:1177.5px;top:99.5px;width:4px;height:1px;background:#e0e0e0;"></div>
<div style="left:1177.5px;top:101.5px;width:4px;height:1px;background:#e0e0e0;"></div>
<div style="left:1177.5px;top:103.5px;width:4px;height:1px;background:#e0e0e0;"></div>
<span class="t hv" style="left:1194.5px;top:94.32px;font-size:12.5px;font-weight:bold;">icon</span>
<div style="left:1215px;top:94px;width:15px;height:15px;border:1px solid #e0e0e0;background:#006400;"></div>
<div style="left:1220px;top:99px;width:5px;height:5px;border:1px solid #e0e0e0;border-radius:50%;"></div>
<span class="t hv" style="left:1230px;top:94.32px;font-size:12.5px;font-weight:bold;">u</span>
<div style="left:1234px;top:94px;width:15px;height:15px;border:1px solid #e0e0e0;background:#006400;"></div>
<div style="left:1240px;top:94px;width:9px;height:9px;border:1px solid #e0e0e0;"></div>
<div style="left:1155px;top:116px;width:92px;height:632px;border:2px solid #000;"></div>
<div style="left:1161px;top:122px;width:52px;height:48px;background:#191970;border:2px solid #000;"></div>
<div style="left:1161px;top:174px;width:52px;height:48px;background:#191970;border:2px solid #000;"></div>
<div style="left:1161px;top:226px;width:52px;height:48px;background:#191970;border:2px solid #000;"></div>
<div style="left:1161px;top:278px;width:52px;height:48px;background:#191970;border:2px solid #000;"></div>
<div style="left:1161px;top:330px;width:52px;height:48px;background:#191970;border:2px solid #000;"></div>
<div style="left:1161px;top:382px;width:52px;height:48px;background:#191970;border:2px solid #000;"></div>
<svg style="left:1163px;top:124px;" width="48" height="44" viewBox="0 0 48 44"><g transform="translate(1 -2)"><path d="M7 13 C10 8.500 14 7 18 8 C23 9.300 27 12 31 11.500 C34 11 36 9.500 38.500 7.500 L38.500 9 L10.500 38.300 C13 36.500 16 36 19 37 C24 38.500 27 40.300 31 39.800 C35 39.300 37.500 37.300 39.500 34.500 L40 35.500 C38 39.500 34 41.800 30 41.800 C25 41.800 21 39.600 16 39.100 C12 38.700 9 39.800 6.500 41 L6.500 39.500 L35.500 10.800 C33 12.800 30 13.600 27 13.300 C23 12.800 20 10.300 16 9.800 C12.500 9.400 10 10.700 7.500 14 Z" fill="#ffff00"/></g><path d="" fill="#ffff00"/></svg>
<svg style="left:1163px;top:176px;" width="48" height="44" viewBox="0 0 48 44"><path d="M17 16 V5 H30 L35.500 12 V16 Z" fill="url(#sty)" stroke="#ffff00" stroke-width="1"/><path d="M30 5 V12 H35.500" fill="none" stroke="#ffff00" stroke-width="1"/><path d="M12.600 13.500 H17 V16.500 H35.500 V13.500 H38 L41 21.600 H7.400 Z" fill="#ffff00"/><rect x="7.400" y="21.600" width="33.600" height="8.400" fill="url(#sty)"/><rect x="7.400" y="21.600" width="33.600" height="1.500" fill="#ffff00"/><rect x="31" y="25" width="7" height="2" fill="#ffff00"/><text x="12" y="38.600" font-family="Liberation Sans,sans-serif" font-size="9" fill="#ffff00" textLength="24" lengthAdjust="spacingAndGlyphs" stroke="#ffff00" stroke-width=".3">PRINT</text></svg>
<svg style="left:1163px;top:228px;" width="48" height="44" viewBox="0 0 48 44"><path d="M4 15 C16 14 24 24 25 38 L25 42 L4 42 Z" fill="url(#sty)"/><path d="M4 34 h10 v8 h-10 z M16 20 l6 3 l2 7 l-7 2 l-3 -6 z" fill="#ffff00"/><path d="M23 20 L35 6" stroke="#ffff00" stroke-width="2" stroke-dasharray="1.500 1.500" fill="none"/><path d="M36 2 l3 3 l-3 3 l-3 -3 z M8 4 l1.500 1.500 l-1.500 1.500 l-1.500 -1.500 z" fill="#ffff00"/><g fill="#ffff00"><rect x="23" y="2" width="1.500" height="1.500"/><rect x="17" y="8" width="1.500" height="1.500"/><rect x="42" y="10" width="1.500" height="1.500"/><rect x="31" y="25" width="1.500" height="1.500"/><rect x="36" y="29" width="1.500" height="1.500"/><rect x="41" y="27" width="1.500" height="1.500"/><rect x="32" y="34" width="1.500" height="1.500"/><rect x="41" y="38" width="1.500" height="1.500"/><rect x="42" y="1" width="1.500" height="1.500"/></g></svg>
<svg style="left:1163px;top:280px;" width="48" height="44" viewBox="0 0 48 44"><g stroke="#ffff00" stroke-width="1.100" fill="none"><circle cx="24" cy="17" r="15"/><circle cx="24" cy="17" r="10"/><circle cx="24" cy="17" r="4.500"/><path d="M9 17 h10.500 M28.500 17 h10.500 M24 2 v10.500 M24 21.500 v10.500 M13.400 6.400 l7.400 7.400 M34.600 6.400 l-7.400 7.400 M13.400 27.600 l7.400 -7.400 M34.600 27.600 l-7.400 -7.400"/></g><text x="24" y="41" font-family="Liberation Sans,sans-serif" font-size="8" fill="#ffff00" text-anchor="middle" textLength="38" lengthAdjust="spacingAndGlyphs">OVERLAYS</text></svg>
<svg style="left:1163px;top:332px;" width="48" height="44" viewBox="0 0 48 44"><path d="M14 7 C16 17 23 26 36 28" stroke="#ffff00" stroke-width="2" fill="none"/><path d="M20.500 19 L24.500 19 L24.500 30 L26 30 L26 37 L18 37 L18 30 L19.500 30 Z" fill="#ffff00"/></svg>
<svg style="left:1163px;top:384px;" width="48" height="44" viewBox="0 0 48 44"><g stroke="#ffff00" stroke-width="1.200" fill="none"><path d="M8 30 L41 30 L38.500 36 L11 36 Z"/><path d="M10.500 30 V22.500 H14 L15.500 30"/><circle cx="24" cy="20.500" r="3"/><path d="M23 23.500 v6.500 M25 23.500 v6.500 M36.500 14 v16"/></g><path d="M5 41 V38 l2.500 -1.500 l2.500 1.500 l2.500 -1.500 l2.500 1.500 l2.500 -1.500 l2.500 1.500 l2.500 -1.500 l2.500 1.500 l2.500 -1.500 l2.500 1.500 l2.500 -1.500 l2.500 1.500 l2.500 -1.500 l2.500 1.500 l2.500 -1.500 l2.500 1.500 V41 Z" fill="#ffff00"/></svg>

</div>
</body></html>
